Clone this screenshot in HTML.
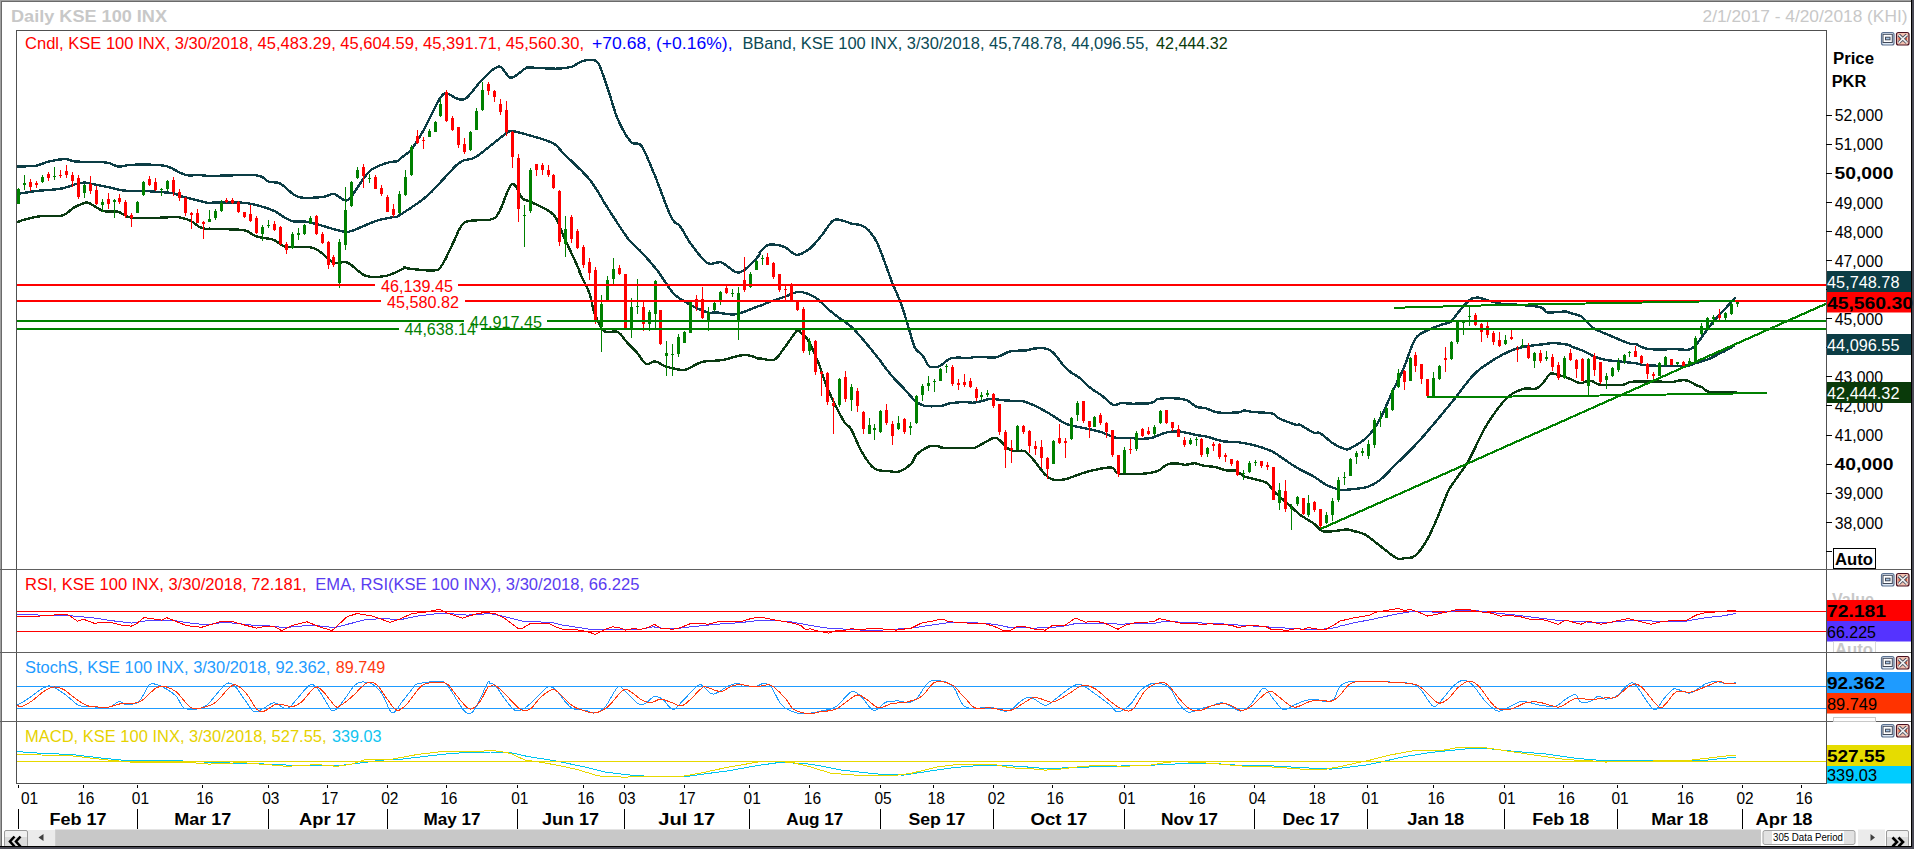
<!DOCTYPE html>
<html><head><meta charset="utf-8"><style>
html,body{margin:0;padding:0;background:#fff;}
body{width:1914px;height:849px;overflow:hidden;position:relative;}
svg{position:absolute;left:0;top:0;display:block;}
text{white-space:pre;}
</style></head><body>
<svg width="1914" height="849" viewBox="0 0 1914 849" shape-rendering="auto">
<rect x="0" y="0" width="1914" height="849" fill="#ffffff"/>
<rect x="0" y="0" width="2" height="849" fill="#a0a0a0"/>
<rect x="0" y="0" width="1914" height="2" fill="#a0a0a0"/>
<rect x="1" y="1" width="1910" height="1" fill="#6a6a6a"/>
<rect x="1" y="1" width="1" height="848" fill="#6a6a6a"/>
<rect x="1911" y="0" width="1" height="849" fill="#000000"/>
<rect x="1912" y="0" width="2" height="849" fill="#4a4a55"/>
<text x="11" y="21.5" font-family='"Liberation Sans", sans-serif' font-weight="bold" font-size="16" fill="#c8c8c8" textLength="156" lengthAdjust="spacingAndGlyphs">Daily KSE 100 INX</text>
<text x="1702.5" y="21.8" font-family='"Liberation Sans", sans-serif' font-size="16" fill="#c8c8c8" textLength="205" lengthAdjust="spacingAndGlyphs">2/1/2017 - 4/20/2018 (KHI)</text>
<defs><clipPath id="cm"><rect x="17" y="31" width="1809" height="538"/></clipPath><clipPath id="cr"><rect x="17" y="570" width="1809" height="82"/></clipPath><clipPath id="cs"><rect x="17" y="653" width="1809" height="68"/></clipPath><clipPath id="cc"><rect x="17" y="722" width="1809" height="61"/></clipPath></defs>
<g clip-path="url(#cm)">
<path d="M16.0,166.5 C19.3,166.4 30.3,166.5 35.8,165.7 C41.3,164.8 44.0,162.6 49.0,161.5 C53.9,160.4 61.1,159.1 65.5,159.1 C69.9,159.1 70.4,161.1 75.4,161.5 C80.3,162.0 89.6,161.7 95.1,161.9 C100.6,162.1 104.5,162.1 108.3,162.9 C112.2,163.6 114.4,166.2 118.2,166.5 C122.1,166.8 125.4,165.1 131.4,164.8 C137.5,164.6 148.5,164.6 154.5,164.8 C160.5,165.1 163.3,165.1 167.7,166.5 C172.1,167.9 177.3,171.6 180.9,173.1 C184.5,174.6 186.4,175.3 189.1,175.6 C191.9,175.8 193.9,174.7 197.4,174.7 C200.8,174.8 200.2,175.8 210.0,175.9 C219.8,176.0 246.2,174.4 255.9,175.3 C265.7,176.3 264.2,180.1 268.3,181.5 C272.4,182.9 275.7,181.3 280.7,183.8 C285.7,186.4 291.3,194.7 298.3,196.9 C305.4,199.1 317.2,197.4 323.1,196.9 C329.0,196.4 330.1,193.4 333.7,193.9 C337.2,194.4 341.3,199.6 344.3,200.1 C347.2,200.5 347.2,201.2 351.3,196.5 C355.5,191.8 363.1,177.4 369.0,171.8 C374.9,166.2 382.0,164.7 386.7,163.0 C391.4,161.2 395.1,161.9 397.3,161.2 C399.5,160.5 397.6,160.9 400.0,158.8 C402.4,156.8 407.9,153.7 411.8,148.9 C415.7,144.1 418.8,138.5 423.6,130.1 C428.3,121.7 436.1,104.4 440.0,98.3 C444.0,92.2 444.4,93.6 447.1,93.6 C449.9,93.6 453.4,97.5 456.5,98.3 C459.7,99.1 461.6,101.4 466.0,98.3 C470.3,95.2 477.0,84.7 482.4,79.4 C487.9,74.1 494.2,66.8 498.9,66.5 C503.7,66.2 506.4,77.4 510.7,77.8 C515.0,78.2 521.6,70.5 524.9,68.8 C528.1,67.1 524.8,67.6 530.0,67.6 C535.2,67.6 549.0,68.8 555.9,68.7 C562.8,68.5 566.9,68.1 571.5,66.8 C576.0,65.5 579.0,61.9 583.1,60.9 C587.2,59.9 592.8,58.8 596.1,60.9 C599.3,63.0 600.2,67.4 602.5,73.3 C604.9,79.3 607.7,88.9 610.3,96.6 C612.9,104.4 614.6,112.4 618.1,119.9 C621.5,127.5 627.2,137.7 631.0,142.0 C634.9,146.3 637.5,140.5 641.4,145.9 C645.3,151.3 649.4,162.5 654.4,174.4 C659.3,186.2 666.9,208.5 671.2,217.1 C675.5,225.7 676.7,221.7 680.0,226.2 C683.3,230.6 686.2,237.5 690.7,243.6 C695.3,249.7 702.1,259.8 707.2,262.9 C712.3,266.1 716.6,261.0 721.3,262.4 C726.1,263.9 731.6,270.7 735.5,271.9 C739.4,273.1 741.0,272.3 744.9,269.5 C748.8,266.8 756.5,258.3 759.0,255.4 C761.6,252.5 758.5,253.7 760.0,251.9 C761.5,250.2 765.1,246.0 768.2,244.9 C771.4,243.8 775.9,244.9 778.8,245.3 C781.8,245.8 783.0,246.1 785.9,247.7 C788.9,249.3 792.6,254.6 796.5,254.8 C800.4,255.0 805.3,252.0 809.5,248.9 C813.6,245.7 817.3,240.6 821.2,235.9 C825.2,231.2 829.5,223.2 833.0,220.6 C836.6,218.0 839.3,220.1 842.4,220.6 C845.6,221.1 848.7,222.9 851.9,223.7 C855.0,224.4 858.5,224.3 861.3,225.3 C864.0,226.4 865.6,226.9 868.4,230.0 C871.1,233.2 873.9,235.5 877.8,244.2 C881.7,252.8 888.0,271.8 891.9,281.8 C895.8,291.9 898.4,296.2 901.3,304.2 C904.2,312.3 907.0,322.7 909.3,330.0 C911.6,337.3 912.8,343.7 915.0,347.9 C917.2,352.1 920.3,352.5 922.5,355.4 C924.7,358.4 926.6,363.5 928.2,365.4 C929.7,367.3 930.0,366.6 931.9,366.8 C933.8,366.9 936.3,367.6 939.5,366.2 C942.6,364.8 946.4,359.7 950.8,358.3 C955.2,356.9 962.6,358.0 965.8,357.9 C969.1,357.8 968.4,358.1 970.0,357.9 C971.6,357.7 972.8,357.1 975.7,357.0 C978.5,356.9 983.5,357.3 987.0,357.3 C990.4,357.4 992.9,358.2 996.4,357.3 C999.8,356.5 1004.9,353.3 1007.7,352.3 C1010.5,351.2 1010.2,351.2 1013.3,350.9 C1016.5,350.6 1023.1,350.8 1026.5,350.4 C1030.0,350.0 1030.9,348.8 1034.1,348.5 C1037.2,348.2 1042.2,347.9 1045.4,348.5 C1048.5,349.1 1049.8,349.3 1052.9,352.3 C1056.1,355.2 1061.1,362.9 1064.2,366.4 C1067.4,369.8 1069.3,371.1 1071.8,373.0 C1074.3,374.9 1076.2,375.2 1079.3,377.7 C1082.5,380.2 1086.8,385.1 1090.6,388.1 C1094.4,391.0 1098.2,392.8 1101.9,395.6 C1105.7,398.4 1110.1,403.8 1113.2,405.0 C1116.4,406.3 1117.6,403.4 1120.8,403.1 C1123.9,402.9 1128.9,403.6 1132.1,403.7 C1135.3,403.8 1137.4,403.6 1140.0,403.6 C1142.6,403.5 1145.3,403.8 1147.5,403.6 C1149.7,403.3 1151.3,403.0 1153.2,402.2 C1155.1,401.5 1154.8,399.5 1158.8,398.8 C1162.9,398.2 1173.0,398.2 1177.7,398.5 C1182.4,398.7 1184.0,399.0 1187.1,400.4 C1190.3,401.7 1193.4,405.4 1196.5,406.8 C1199.7,408.1 1202.5,407.3 1206.0,408.3 C1209.4,409.2 1211.9,411.7 1217.3,412.4 C1222.6,413.1 1233.6,412.7 1238.0,412.4 C1242.4,412.1 1241.1,410.6 1243.7,410.5 C1246.2,410.5 1248.4,411.5 1253.1,412.0 C1257.8,412.5 1267.5,412.4 1271.9,413.5 C1276.3,414.6 1275.4,416.8 1279.5,418.6 C1283.5,420.5 1293.0,423.8 1296.4,424.9 C1299.8,425.9 1297.2,423.5 1300.0,424.8 C1302.8,426.1 1310.1,431.2 1313.4,432.6 C1316.8,434.0 1316.8,431.2 1320.1,433.1 C1323.5,434.9 1329.5,441.2 1333.6,443.8 C1337.7,446.5 1342.0,448.2 1344.8,449.0 C1347.6,449.7 1346.6,450.3 1350.4,448.3 C1354.1,446.3 1362.2,442.0 1367.2,437.1 C1372.1,432.2 1375.9,426.3 1380.0,419.0 C1384.1,411.7 1387.9,401.5 1391.8,393.1 C1395.7,384.6 1399.6,377.4 1403.6,368.3 C1407.5,359.3 1411.4,345.2 1415.3,338.9 C1419.3,332.6 1422.8,333.0 1427.1,330.6 C1431.4,328.3 1437.3,326.2 1441.2,324.8 C1445.2,323.3 1447.9,323.9 1450.7,321.9 C1453.4,320.0 1454.6,316.6 1457.7,313.0 C1460.9,309.3 1466.4,302.6 1469.5,300.0 C1472.7,297.5 1474.6,297.9 1476.6,297.7 C1478.5,297.4 1478.9,297.8 1481.3,298.4 C1483.7,299.0 1487.2,300.3 1490.7,301.2 C1494.3,302.1 1498.2,303.4 1502.5,304.0 C1506.8,304.6 1510.3,304.2 1516.6,304.7 C1522.9,305.2 1535.1,305.8 1540.2,307.1 C1545.3,308.4 1544.1,311.7 1547.3,312.5 C1550.4,313.3 1555.5,311.9 1559.0,311.8 C1562.6,311.7 1566.6,311.6 1568.5,311.8 C1570.3,312.0 1567.8,312.2 1570.0,313.0 C1572.2,313.8 1577.7,314.1 1581.5,316.6 C1585.4,319.1 1588.1,324.6 1593.1,327.8 C1598.0,331.1 1605.2,333.4 1611.2,336.1 C1617.3,338.7 1625.2,342.2 1629.4,343.5 C1633.5,344.8 1634.0,343.4 1636.0,344.0 C1637.9,344.5 1638.4,345.9 1640.9,346.8 C1643.4,347.7 1645.0,348.8 1650.8,349.2 C1656.6,349.7 1669.2,349.2 1675.5,349.2 C1681.8,349.3 1685.4,350.2 1688.7,349.6 C1692.0,349.0 1693.1,347.7 1695.3,345.6 C1697.5,343.5 1699.7,339.9 1701.9,336.9 C1704.1,333.9 1706.3,330.7 1708.5,327.8 C1710.7,324.9 1712.3,322.7 1715.1,319.6 C1717.8,316.4 1721.6,312.6 1725.0,308.9 C1728.4,305.1 1733.9,299.2 1735.7,297.3" fill="none" stroke="#0c3d45" stroke-width="2.4" stroke-linejoin="round" shape-rendering="crispEdges"/>
<path d="M16.0,194.2 C19.6,193.6 30.0,191.8 37.4,190.9 C44.9,190.0 53.9,189.9 60.5,188.7 C67.1,187.6 72.9,184.8 77.0,183.8 C81.1,182.8 82.2,182.5 85.2,182.6 C88.3,182.8 91.3,183.9 95.1,184.6 C99.0,185.4 104.5,186.3 108.3,187.1 C112.2,187.9 114.9,188.9 118.2,189.6 C121.5,190.2 123.2,190.6 128.1,190.9 C133.1,191.2 140.5,190.8 147.9,191.2 C155.3,191.6 167.1,192.4 172.6,193.2 C178.1,194.0 177.9,195.3 180.9,196.2 C183.9,197.1 186.7,197.6 190.8,198.6 C194.9,199.7 202.4,201.8 205.6,202.4 C208.8,203.1 204.0,202.7 210.0,202.7 C216.0,202.8 234.1,202.3 241.8,202.7 C249.5,203.1 250.6,203.7 255.9,205.0 C261.2,206.3 267.7,208.0 273.6,210.7 C279.5,213.3 285.4,219.0 291.3,220.9 C297.2,222.8 300.7,220.5 308.9,222.2 C317.2,223.8 333.7,229.5 340.7,231.0 C347.8,232.5 345.5,232.7 351.3,231.0 C357.2,229.3 369.0,223.3 376.1,220.9 C383.1,218.6 389.8,217.9 393.7,216.9 C397.7,215.9 394.2,218.6 400.0,214.9 C405.8,211.2 418.5,203.5 428.3,194.9 C438.1,186.2 451.0,169.4 458.9,163.1 C466.7,156.8 467.5,162.1 475.4,157.2 C483.2,152.3 499.7,137.9 506.0,133.6 C512.3,129.3 509.1,131.0 513.1,131.3 C517.1,131.6 523.3,133.5 530.0,135.5 C536.7,137.5 547.7,140.2 553.3,143.3 C558.9,146.3 557.6,147.6 563.7,153.6 C569.7,159.7 582.2,170.5 589.6,179.5 C596.9,188.6 601.2,198.1 607.7,208.0 C614.2,218.0 622.8,231.8 628.4,239.1 C634.1,246.5 636.6,246.9 641.4,252.1 C646.1,257.2 653.0,265.1 656.9,269.9 C660.8,274.8 661.9,277.2 664.8,281.3 C667.7,285.3 670.3,290.5 674.2,294.3 C678.2,298.0 682.9,300.7 688.4,303.7 C693.9,306.7 702.5,310.9 707.2,312.4 C711.9,313.8 711.9,312.1 716.6,312.4 C721.3,312.7 728.4,315.3 735.5,314.3 C742.5,313.2 754.9,307.4 759.0,306.0 C763.1,304.7 758.3,306.8 760.0,306.1 C761.7,305.4 765.5,303.4 769.4,301.9 C773.3,300.4 778.8,298.8 783.6,297.2 C788.3,295.5 793.8,292.6 797.7,292.0 C801.6,291.4 804.0,292.6 807.1,293.6 C810.3,294.7 812.6,295.4 816.5,298.3 C820.5,301.3 825.2,306.8 830.7,311.3 C836.2,315.8 845.5,322.3 849.5,325.4 C853.5,328.5 850.3,325.2 854.7,330.0 C859.0,334.8 869.4,347.1 875.4,354.5 C881.4,361.9 885.4,368.3 890.5,374.3 C895.5,380.3 901.5,385.9 905.5,390.3 C909.6,394.7 911.8,398.1 915.0,400.7 C918.1,403.3 920.0,404.9 924.4,405.8 C928.8,406.6 937.0,406.2 941.3,405.8 C945.7,405.3 946.1,403.8 950.8,403.1 C955.5,402.5 966.4,402.0 969.6,402.0 C972.8,402.0 968.1,403.3 970.0,403.1 C971.9,403.0 977.9,402.0 981.3,401.3 C984.8,400.5 987.6,399.0 990.7,398.8 C993.9,398.6 997.0,399.6 1000.2,399.9 C1003.3,400.2 1005.8,400.5 1009.6,400.7 C1013.3,400.9 1018.4,400.3 1022.8,401.3 C1027.2,402.2 1031.6,404.3 1036.0,406.3 C1040.4,408.4 1044.4,410.7 1049.2,413.5 C1053.9,416.3 1059.8,420.8 1064.2,422.9 C1068.6,425.1 1071.1,425.2 1075.5,426.3 C1079.9,427.4 1086.2,428.5 1090.6,429.5 C1095.0,430.5 1097.8,431.0 1101.9,432.3 C1106.0,433.7 1110.4,436.7 1115.1,437.6 C1119.8,438.6 1126.0,437.8 1130.2,438.0 C1134.3,438.2 1136.5,438.8 1140.0,438.8 C1143.5,438.8 1147.5,438.9 1151.3,438.0 C1155.1,437.2 1159.5,434.7 1162.6,433.7 C1165.8,432.7 1167.0,432.1 1170.2,431.8 C1173.3,431.5 1177.1,431.3 1181.5,431.8 C1185.9,432.4 1192.1,434.2 1196.5,435.0 C1200.9,435.9 1203.5,435.9 1207.8,436.9 C1212.2,438.0 1217.9,440.4 1222.9,441.3 C1228.0,442.1 1233.0,441.6 1238.0,442.2 C1243.0,442.8 1248.1,443.8 1253.1,445.0 C1258.1,446.3 1264.4,448.3 1268.2,449.7 C1271.9,451.1 1271.9,451.1 1275.7,453.5 C1279.5,455.9 1286.7,461.2 1290.8,463.9 C1294.8,466.5 1296.2,467.5 1300.0,469.5 C1303.8,471.6 1309.0,473.6 1313.4,476.3 C1317.9,478.9 1322.4,483.0 1326.9,485.2 C1331.3,487.5 1336.2,489.0 1340.3,489.7 C1344.4,490.4 1347.0,489.7 1351.5,489.2 C1356.0,488.8 1362.4,488.5 1367.2,487.0 C1371.9,485.5 1375.5,483.5 1380.0,480.0 C1384.5,476.5 1387.9,472.3 1394.1,466.1 C1400.4,459.9 1410.2,450.6 1417.7,442.5 C1425.2,434.5 1432.6,425.3 1438.9,417.8 C1445.2,410.3 1449.5,405.0 1455.4,397.8 C1461.3,390.5 1467.9,380.5 1474.2,374.2 C1480.5,367.9 1486.8,364.1 1493.1,360.1 C1499.4,356.1 1506.4,352.5 1511.9,350.2 C1517.4,347.9 1520.6,347.5 1526.1,346.4 C1531.6,345.4 1540.2,344.6 1544.9,344.1 C1549.6,343.5 1550.4,343.0 1554.3,343.1 C1558.2,343.3 1565.8,344.3 1568.5,344.8 C1571.1,345.3 1567.5,344.9 1570.0,346.0 C1572.5,347.0 1579.1,349.1 1583.2,350.9 C1587.3,352.7 1590.9,355.2 1594.7,356.7 C1598.6,358.2 1602.7,359.2 1606.3,360.0 C1609.8,360.7 1611.2,360.6 1616.2,361.1 C1621.1,361.7 1630.7,362.6 1636.0,363.3 C1641.2,364.0 1639.2,365.0 1647.5,365.4 C1655.7,365.8 1677.4,366.1 1685.4,365.7 C1693.4,365.4 1691.5,364.4 1695.3,363.3 C1699.2,362.2 1704.7,360.7 1708.5,359.1 C1712.3,357.6 1715.1,355.8 1718.4,354.2 C1721.7,352.5 1725.5,350.8 1728.3,349.2 C1731.0,347.7 1733.8,345.8 1734.9,345.1" fill="none" stroke="#0c3d45" stroke-width="2.4" stroke-linejoin="round" shape-rendering="crispEdges"/>
<path d="M16.0,222.5 C17.6,222.0 21.5,220.3 25.9,219.2 C30.3,218.2 36.3,216.6 42.4,216.0 C48.4,215.3 56.9,217.0 62.2,215.6 C67.4,214.2 69.9,209.9 73.7,207.7 C77.6,205.6 82.5,203.4 85.2,202.8 C88.0,202.1 87.2,202.2 90.2,203.6 C93.2,205.0 98.7,209.6 103.4,211.0 C108.1,212.4 113.6,210.7 118.2,211.8 C122.9,212.9 123.7,216.6 131.4,217.6 C139.1,218.6 157.8,217.7 164.4,217.6 C171.0,217.5 168.2,216.8 171.0,216.8 C173.7,216.8 177.6,216.9 180.9,217.6 C184.2,218.3 187.8,219.4 190.8,220.9 C193.8,222.4 196.5,225.4 199.0,226.7 C201.5,228.0 203.8,228.5 205.6,228.8 C207.4,229.2 206.6,228.6 210.0,228.7 C213.4,228.8 220.0,228.9 225.9,229.2 C231.8,229.5 240.3,229.3 245.3,230.5 C250.3,231.6 251.2,234.7 255.9,236.3 C260.6,237.9 268.6,238.1 273.6,239.8 C278.6,241.6 280.1,245.7 286.0,246.9 C291.9,248.1 303.3,246.2 308.9,246.9 C314.5,247.6 315.4,248.7 319.5,251.3 C323.7,253.9 329.0,260.5 333.7,262.4 C338.4,264.4 342.5,260.6 347.8,262.8 C353.1,265.0 359.0,273.5 365.5,275.7 C372.0,277.8 380.2,277.0 386.7,275.7 C393.2,274.4 401.2,269.3 404.3,268.1 C407.5,266.8 400.6,267.8 405.5,268.2 C410.4,268.6 427.6,271.1 433.7,270.5 C439.9,269.9 438.9,269.6 442.2,264.8 C445.5,260.1 449.8,249.3 453.5,242.2 C457.3,235.2 458.7,226.2 464.8,222.4 C471.0,218.7 484.6,221.3 490.3,219.6 C496.0,218.0 495.3,218.4 498.9,212.5 C502.5,206.7 508.0,186.6 511.9,184.3 C515.8,181.9 519.5,195.5 522.5,198.4 C525.5,201.3 524.9,198.9 530.0,201.6 C535.1,204.2 547.7,208.7 553.3,214.5 C558.9,220.3 559.4,227.3 563.7,236.5 C568.0,245.8 576.5,263.9 579.2,269.9 C581.9,276.0 578.3,269.2 580.0,273.1 C581.7,276.9 587.1,286.6 589.4,293.1 C591.8,299.6 591.8,305.6 594.1,311.9 C596.5,318.2 599.6,327.4 603.6,330.8 C607.5,334.1 613.8,330.0 617.7,331.9 C621.6,333.9 624.0,339.2 627.1,342.5 C630.3,345.9 633.4,348.4 636.5,352.0 C639.7,355.5 642.8,362.2 646.0,363.7 C649.1,365.3 652.2,361.0 655.4,361.4 C658.5,361.8 660.9,364.7 664.8,366.1 C668.7,367.5 675.4,369.0 678.9,369.6 C682.5,370.2 682.1,370.9 686.0,369.6 C689.9,368.3 696.6,363.4 702.5,361.9 C708.4,360.3 715.1,361.3 721.3,360.2 C727.6,359.2 735.5,356.3 740.2,355.5 C744.9,354.7 746.5,354.9 749.6,355.5 C752.8,356.1 757.3,358.5 759.0,359.0 C760.8,359.5 757.5,358.3 760.0,358.4 C762.5,358.5 770.2,361.2 774.1,359.6 C778.1,358.0 779.7,353.9 783.6,349.0 C787.4,344.1 794.5,333.0 797.2,330.1 C800.0,327.3 798.3,330.3 800.0,331.9 C801.7,333.4 804.4,334.1 807.5,339.4 C810.7,344.8 815.4,355.4 818.8,363.9 C822.3,372.4 824.2,380.9 828.3,390.3 C832.4,399.7 839.6,414.0 843.3,420.5 C847.1,426.9 847.7,423.6 850.9,428.9 C854.0,434.3 858.3,445.9 862.2,452.5 C866.1,459.1 869.7,465.4 874.4,468.5 C879.2,471.7 886.2,470.9 890.5,471.3 C894.7,471.8 896.4,472.6 899.9,471.3 C903.3,470.1 908.4,466.6 911.2,463.8 C914.0,461.0 914.0,457.2 916.8,454.4 C919.7,451.6 924.7,448.3 928.2,446.8 C931.6,445.4 935.1,445.7 937.6,445.9 C940.1,446.1 937.8,447.5 943.2,447.8 C948.6,448.1 964.6,447.9 970.0,447.8 C975.4,447.7 971.7,449.1 975.7,447.4 C979.6,445.8 989.5,439.1 993.6,438.0 C997.6,436.9 997.8,439.1 1000.2,440.8 C1002.5,442.6 1005.2,446.6 1007.7,448.4 C1010.2,450.1 1012.4,450.7 1015.2,451.2 C1018.1,451.7 1021.5,449.6 1024.7,451.2 C1027.8,452.8 1030.6,456.7 1034.1,460.6 C1037.5,464.5 1042.2,471.6 1045.4,474.8 C1048.5,477.9 1049.8,478.7 1052.9,479.5 C1056.1,480.3 1060.5,480.1 1064.2,479.5 C1068.0,478.8 1071.8,477.0 1075.5,475.7 C1079.3,474.4 1081.8,473.2 1086.8,471.9 C1091.9,470.6 1101.3,468.4 1105.7,467.8 C1110.1,467.2 1111.0,467.2 1113.2,468.2 C1115.4,469.2 1114.4,472.9 1118.9,473.8 C1123.3,474.8 1134.6,474.0 1140.0,473.9 C1145.4,473.7 1148.2,473.3 1151.3,472.7 C1154.4,472.2 1156.3,471.8 1158.8,470.5 C1161.4,469.1 1163.6,466.0 1166.4,464.8 C1169.2,463.6 1172.7,463.3 1175.8,463.3 C1178.9,463.3 1182.1,464.8 1185.2,464.8 C1188.4,464.8 1191.5,463.1 1194.7,463.3 C1197.8,463.5 1200.6,465.1 1204.1,465.8 C1207.5,466.4 1211.6,466.3 1215.4,467.1 C1219.2,467.9 1223.2,469.8 1226.7,470.5 C1230.1,471.1 1233.3,469.9 1236.1,470.8 C1238.9,471.8 1240.8,474.8 1243.7,476.1 C1246.5,477.5 1249.3,477.8 1253.1,478.9 C1256.8,480.0 1262.5,480.4 1266.3,482.7 C1270.0,485.1 1271.6,489.2 1275.7,493.1 C1279.8,497.0 1286.7,502.7 1290.8,506.3 C1294.8,509.9 1296.2,511.9 1300.0,514.8 C1303.8,517.6 1309.7,520.5 1313.4,523.3 C1317.2,526.0 1319.0,529.8 1322.4,531.1 C1325.7,532.4 1329.5,531.4 1333.6,531.1 C1337.7,530.8 1343.7,529.5 1347.0,529.5 C1350.4,529.5 1350.7,530.3 1353.7,531.1 C1356.7,531.9 1360.8,532.2 1364.9,534.5 C1369.0,536.7 1373.1,540.6 1378.4,544.5 C1383.6,548.5 1391.8,555.7 1396.3,558.0 C1400.7,560.2 1402.0,558.3 1405.2,558.0 C1408.4,557.6 1411.6,558.9 1415.3,555.7 C1419.0,552.6 1423.7,545.8 1427.6,538.9 C1431.5,532.0 1435.4,522.2 1438.8,514.3 C1442.2,506.5 1445.0,497.7 1447.8,491.9 C1450.5,486.2 1451.8,485.5 1455.4,480.0 C1459.0,474.5 1464.4,468.0 1469.5,459.0 C1474.6,450.0 1479.7,436.3 1486.0,426.1 C1492.3,415.8 1500.9,404.0 1507.2,397.8 C1513.5,391.6 1519.0,390.3 1523.7,388.8 C1528.4,387.3 1532.3,389.7 1535.5,388.8 C1538.6,388.0 1540.2,386.1 1542.5,383.7 C1544.9,381.2 1547.6,375.9 1549.6,374.2 C1551.6,372.6 1552.0,373.4 1554.3,373.8 C1556.7,374.1 1561.1,375.7 1563.7,376.6 C1566.4,377.4 1567.3,377.9 1570.0,378.9 C1572.7,380.0 1577.1,382.6 1579.9,383.1 C1582.6,383.5 1584.3,381.7 1586.5,381.4 C1588.7,381.1 1590.9,380.9 1593.1,381.4 C1595.3,382.0 1594.7,384.1 1599.7,384.7 C1604.6,385.2 1617.5,385.2 1622.8,384.7 C1628.0,384.2 1626.6,382.4 1631.0,381.9 C1635.4,381.3 1642.3,381.4 1649.1,381.4 C1656.0,381.4 1667.3,382.0 1672.2,381.9 C1677.2,381.8 1676.3,380.8 1678.8,380.6 C1681.3,380.4 1684.0,379.8 1687.1,380.6 C1690.1,381.4 1694.5,384.4 1697.0,385.5 C1699.4,386.6 1699.7,386.1 1701.9,387.2 C1704.1,388.3 1704.4,391.3 1710.1,392.1 C1715.9,392.9 1732.1,392.1 1736.5,392.1" fill="none" stroke="#0a3a12" stroke-width="2.4" stroke-linejoin="round" shape-rendering="crispEdges"/>
<rect x="18" y="188" width="1" height="16" fill="#008000"/>
<rect x="17" y="189" width="3" height="15" fill="#008000"/>
<rect x="24" y="175" width="1" height="15" fill="#008000"/>
<rect x="23" y="183" width="3" height="2" fill="#008000"/>
<rect x="30" y="179" width="1" height="12" fill="#ff0000"/>
<rect x="29" y="182" width="3" height="5" fill="#ff0000"/>
<rect x="36" y="181" width="1" height="7" fill="#ff0000"/>
<rect x="35" y="183" width="3" height="2" fill="#ff0000"/>
<rect x="42" y="175" width="1" height="8" fill="#008000"/>
<rect x="41" y="177" width="3" height="5" fill="#008000"/>
<rect x="48" y="172" width="1" height="9" fill="#ff0000"/>
<rect x="47" y="174" width="3" height="4" fill="#ff0000"/>
<rect x="54" y="167" width="1" height="13" fill="#008000"/>
<rect x="53" y="176" width="3" height="1" fill="#008000"/>
<rect x="60" y="170" width="1" height="8" fill="#ff0000"/>
<rect x="59" y="175" width="3" height="1" fill="#ff0000"/>
<rect x="66" y="165" width="1" height="13" fill="#ff0000"/>
<rect x="65" y="171" width="3" height="4" fill="#ff0000"/>
<rect x="72" y="172" width="1" height="15" fill="#ff0000"/>
<rect x="71" y="175" width="3" height="6" fill="#ff0000"/>
<rect x="78" y="175" width="1" height="24" fill="#ff0000"/>
<rect x="77" y="178" width="3" height="19" fill="#ff0000"/>
<rect x="84" y="184" width="1" height="14" fill="#008000"/>
<rect x="83" y="185" width="3" height="8" fill="#008000"/>
<rect x="90" y="176" width="1" height="18" fill="#ff0000"/>
<rect x="89" y="184" width="3" height="7" fill="#ff0000"/>
<rect x="96" y="186" width="1" height="19" fill="#ff0000"/>
<rect x="95" y="190" width="3" height="14" fill="#ff0000"/>
<rect x="102" y="199" width="1" height="13" fill="#008000"/>
<rect x="101" y="202" width="3" height="3" fill="#008000"/>
<rect x="108" y="193" width="1" height="16" fill="#ff0000"/>
<rect x="107" y="199" width="3" height="5" fill="#ff0000"/>
<rect x="114" y="199" width="1" height="19" fill="#008000"/>
<rect x="113" y="200" width="3" height="2" fill="#008000"/>
<rect x="119" y="194" width="1" height="10" fill="#ff0000"/>
<rect x="118" y="198" width="3" height="4" fill="#ff0000"/>
<rect x="125" y="200" width="1" height="18" fill="#ff0000"/>
<rect x="124" y="202" width="3" height="14" fill="#ff0000"/>
<rect x="131" y="213" width="1" height="14" fill="#ff0000"/>
<rect x="130" y="215" width="3" height="3" fill="#ff0000"/>
<rect x="137" y="201" width="1" height="12" fill="#008000"/>
<rect x="136" y="202" width="3" height="11" fill="#008000"/>
<rect x="143" y="181" width="1" height="15" fill="#008000"/>
<rect x="142" y="182" width="3" height="13" fill="#008000"/>
<rect x="149" y="176" width="1" height="10" fill="#ff0000"/>
<rect x="148" y="179" width="3" height="6" fill="#ff0000"/>
<rect x="155" y="178" width="1" height="13" fill="#ff0000"/>
<rect x="154" y="182" width="3" height="8" fill="#ff0000"/>
<rect x="161" y="188" width="1" height="8" fill="#008000"/>
<rect x="160" y="189" width="3" height="1" fill="#008000"/>
<rect x="167" y="180" width="1" height="11" fill="#008000"/>
<rect x="166" y="181" width="3" height="8" fill="#008000"/>
<rect x="173" y="177" width="1" height="19" fill="#ff0000"/>
<rect x="172" y="180" width="3" height="12" fill="#ff0000"/>
<rect x="179" y="189" width="1" height="12" fill="#ff0000"/>
<rect x="178" y="192" width="3" height="6" fill="#ff0000"/>
<rect x="185" y="197" width="1" height="19" fill="#ff0000"/>
<rect x="184" y="198" width="3" height="15" fill="#ff0000"/>
<rect x="191" y="212" width="1" height="17" fill="#ff0000"/>
<rect x="190" y="213" width="3" height="2" fill="#ff0000"/>
<rect x="197" y="209" width="1" height="14" fill="#ff0000"/>
<rect x="196" y="213" width="3" height="10" fill="#ff0000"/>
<rect x="203" y="221" width="1" height="18" fill="#ff0000"/>
<rect x="202" y="222" width="3" height="2" fill="#ff0000"/>
<rect x="209" y="210" width="1" height="12" fill="#008000"/>
<rect x="208" y="219" width="3" height="3" fill="#008000"/>
<rect x="215" y="209" width="1" height="11" fill="#008000"/>
<rect x="214" y="211" width="3" height="7" fill="#008000"/>
<rect x="221" y="200" width="1" height="12" fill="#008000"/>
<rect x="220" y="203" width="3" height="8" fill="#008000"/>
<rect x="226" y="198" width="1" height="5" fill="#ff0000"/>
<rect x="225" y="200" width="3" height="2" fill="#ff0000"/>
<rect x="232" y="198" width="1" height="6" fill="#ff0000"/>
<rect x="231" y="200" width="3" height="3" fill="#ff0000"/>
<rect x="238" y="201" width="1" height="12" fill="#ff0000"/>
<rect x="237" y="202" width="3" height="10" fill="#ff0000"/>
<rect x="244" y="212" width="1" height="6" fill="#ff0000"/>
<rect x="243" y="212" width="3" height="5" fill="#ff0000"/>
<rect x="250" y="205" width="1" height="17" fill="#ff0000"/>
<rect x="249" y="214" width="3" height="7" fill="#ff0000"/>
<rect x="256" y="216" width="1" height="18" fill="#ff0000"/>
<rect x="255" y="218" width="3" height="15" fill="#ff0000"/>
<rect x="262" y="225" width="1" height="16" fill="#008000"/>
<rect x="261" y="227" width="3" height="7" fill="#008000"/>
<rect x="268" y="220" width="1" height="8" fill="#008000"/>
<rect x="267" y="225" width="3" height="1" fill="#008000"/>
<rect x="274" y="221" width="1" height="10" fill="#ff0000"/>
<rect x="273" y="224" width="3" height="6" fill="#ff0000"/>
<rect x="280" y="226" width="1" height="19" fill="#ff0000"/>
<rect x="279" y="227" width="3" height="17" fill="#ff0000"/>
<rect x="286" y="242" width="1" height="12" fill="#ff0000"/>
<rect x="285" y="244" width="3" height="6" fill="#ff0000"/>
<rect x="292" y="232" width="1" height="17" fill="#008000"/>
<rect x="291" y="234" width="3" height="14" fill="#008000"/>
<rect x="298" y="228" width="1" height="12" fill="#008000"/>
<rect x="297" y="233" width="3" height="2" fill="#008000"/>
<rect x="304" y="224" width="1" height="11" fill="#008000"/>
<rect x="303" y="225" width="3" height="9" fill="#008000"/>
<rect x="310" y="216" width="1" height="8" fill="#008000"/>
<rect x="309" y="218" width="3" height="5" fill="#008000"/>
<rect x="316" y="215" width="1" height="20" fill="#ff0000"/>
<rect x="315" y="216" width="3" height="18" fill="#ff0000"/>
<rect x="322" y="232" width="1" height="12" fill="#ff0000"/>
<rect x="321" y="234" width="3" height="9" fill="#ff0000"/>
<rect x="328" y="241" width="1" height="28" fill="#ff0000"/>
<rect x="327" y="242" width="3" height="23" fill="#ff0000"/>
<rect x="333" y="255" width="1" height="12" fill="#ff0000"/>
<rect x="332" y="257" width="3" height="8" fill="#ff0000"/>
<rect x="339" y="239" width="1" height="49" fill="#008000"/>
<rect x="338" y="242" width="3" height="41" fill="#008000"/>
<rect x="345" y="187" width="1" height="63" fill="#008000"/>
<rect x="344" y="210" width="3" height="35" fill="#008000"/>
<rect x="351" y="181" width="1" height="26" fill="#008000"/>
<rect x="350" y="182" width="3" height="24" fill="#008000"/>
<rect x="357" y="167" width="1" height="12" fill="#008000"/>
<rect x="356" y="170" width="3" height="8" fill="#008000"/>
<rect x="363" y="164" width="1" height="24" fill="#ff0000"/>
<rect x="362" y="167" width="3" height="9" fill="#ff0000"/>
<rect x="369" y="174" width="1" height="9" fill="#008000"/>
<rect x="368" y="178" width="3" height="1" fill="#008000"/>
<rect x="375" y="175" width="1" height="14" fill="#ff0000"/>
<rect x="374" y="177" width="3" height="12" fill="#ff0000"/>
<rect x="381" y="185" width="1" height="11" fill="#ff0000"/>
<rect x="380" y="188" width="3" height="6" fill="#ff0000"/>
<rect x="387" y="195" width="1" height="17" fill="#ff0000"/>
<rect x="386" y="197" width="3" height="15" fill="#ff0000"/>
<rect x="393" y="204" width="1" height="13" fill="#ff0000"/>
<rect x="392" y="209" width="3" height="6" fill="#ff0000"/>
<rect x="399" y="191" width="1" height="23" fill="#008000"/>
<rect x="398" y="194" width="3" height="19" fill="#008000"/>
<rect x="405" y="170" width="1" height="26" fill="#008000"/>
<rect x="404" y="177" width="3" height="18" fill="#008000"/>
<rect x="411" y="145" width="1" height="31" fill="#008000"/>
<rect x="410" y="147" width="3" height="28" fill="#008000"/>
<rect x="417" y="130" width="1" height="14" fill="#ff0000"/>
<rect x="416" y="136" width="3" height="7" fill="#ff0000"/>
<rect x="423" y="137" width="1" height="12" fill="#ff0000"/>
<rect x="422" y="140" width="3" height="1" fill="#ff0000"/>
<rect x="429" y="129" width="1" height="8" fill="#008000"/>
<rect x="428" y="131" width="3" height="6" fill="#008000"/>
<rect x="435" y="121" width="1" height="11" fill="#008000"/>
<rect x="434" y="122" width="3" height="10" fill="#008000"/>
<rect x="440" y="99" width="1" height="18" fill="#008000"/>
<rect x="439" y="104" width="3" height="12" fill="#008000"/>
<rect x="446" y="90" width="1" height="32" fill="#ff0000"/>
<rect x="445" y="92" width="3" height="29" fill="#ff0000"/>
<rect x="452" y="116" width="1" height="15" fill="#ff0000"/>
<rect x="451" y="118" width="3" height="12" fill="#ff0000"/>
<rect x="458" y="127" width="1" height="21" fill="#ff0000"/>
<rect x="457" y="127" width="3" height="18" fill="#ff0000"/>
<rect x="464" y="138" width="1" height="16" fill="#ff0000"/>
<rect x="463" y="144" width="3" height="8" fill="#ff0000"/>
<rect x="470" y="131" width="1" height="20" fill="#008000"/>
<rect x="469" y="132" width="3" height="18" fill="#008000"/>
<rect x="476" y="108" width="1" height="22" fill="#008000"/>
<rect x="475" y="111" width="3" height="19" fill="#008000"/>
<rect x="482" y="82" width="1" height="29" fill="#008000"/>
<rect x="481" y="90" width="3" height="20" fill="#008000"/>
<rect x="488" y="82" width="1" height="13" fill="#ff0000"/>
<rect x="487" y="84" width="3" height="7" fill="#ff0000"/>
<rect x="494" y="90" width="1" height="12" fill="#ff0000"/>
<rect x="493" y="91" width="3" height="6" fill="#ff0000"/>
<rect x="500" y="99" width="1" height="16" fill="#ff0000"/>
<rect x="499" y="104" width="3" height="8" fill="#ff0000"/>
<rect x="506" y="101" width="1" height="35" fill="#ff0000"/>
<rect x="505" y="110" width="3" height="22" fill="#ff0000"/>
<rect x="512" y="131" width="1" height="37" fill="#ff0000"/>
<rect x="511" y="132" width="3" height="25" fill="#ff0000"/>
<rect x="518" y="154" width="1" height="68" fill="#ff0000"/>
<rect x="517" y="158" width="3" height="51" fill="#ff0000"/>
<rect x="524" y="205" width="1" height="42" fill="#008000"/>
<rect x="523" y="215" width="3" height="1" fill="#008000"/>
<rect x="530" y="168" width="1" height="45" fill="#008000"/>
<rect x="529" y="170" width="3" height="41" fill="#008000"/>
<rect x="536" y="164" width="1" height="12" fill="#ff0000"/>
<rect x="535" y="164" width="3" height="6" fill="#ff0000"/>
<rect x="542" y="163" width="1" height="12" fill="#ff0000"/>
<rect x="541" y="165" width="3" height="5" fill="#ff0000"/>
<rect x="548" y="165" width="1" height="12" fill="#ff0000"/>
<rect x="547" y="170" width="3" height="5" fill="#ff0000"/>
<rect x="553" y="174" width="1" height="15" fill="#ff0000"/>
<rect x="552" y="175" width="3" height="13" fill="#ff0000"/>
<rect x="559" y="190" width="1" height="56" fill="#ff0000"/>
<rect x="558" y="191" width="3" height="51" fill="#ff0000"/>
<rect x="565" y="216" width="1" height="41" fill="#008000"/>
<rect x="564" y="229" width="3" height="15" fill="#008000"/>
<rect x="571" y="215" width="1" height="28" fill="#ff0000"/>
<rect x="570" y="217" width="3" height="22" fill="#ff0000"/>
<rect x="577" y="229" width="1" height="20" fill="#ff0000"/>
<rect x="576" y="231" width="3" height="17" fill="#ff0000"/>
<rect x="583" y="245" width="1" height="23" fill="#ff0000"/>
<rect x="582" y="247" width="3" height="18" fill="#ff0000"/>
<rect x="589" y="258" width="1" height="22" fill="#ff0000"/>
<rect x="588" y="262" width="3" height="11" fill="#ff0000"/>
<rect x="595" y="267" width="1" height="57" fill="#ff0000"/>
<rect x="594" y="270" width="3" height="51" fill="#ff0000"/>
<rect x="601" y="295" width="1" height="57" fill="#008000"/>
<rect x="600" y="304" width="3" height="23" fill="#008000"/>
<rect x="607" y="276" width="1" height="26" fill="#008000"/>
<rect x="606" y="280" width="3" height="21" fill="#008000"/>
<rect x="613" y="258" width="1" height="28" fill="#008000"/>
<rect x="612" y="269" width="3" height="10" fill="#008000"/>
<rect x="619" y="265" width="1" height="10" fill="#ff0000"/>
<rect x="618" y="268" width="3" height="6" fill="#ff0000"/>
<rect x="625" y="274" width="1" height="54" fill="#ff0000"/>
<rect x="624" y="274" width="3" height="54" fill="#ff0000"/>
<rect x="631" y="298" width="1" height="40" fill="#008000"/>
<rect x="630" y="307" width="3" height="23" fill="#008000"/>
<rect x="637" y="279" width="1" height="35" fill="#008000"/>
<rect x="636" y="306" width="3" height="1" fill="#008000"/>
<rect x="643" y="302" width="1" height="29" fill="#ff0000"/>
<rect x="642" y="307" width="3" height="17" fill="#ff0000"/>
<rect x="649" y="310" width="1" height="21" fill="#008000"/>
<rect x="648" y="312" width="3" height="12" fill="#008000"/>
<rect x="655" y="280" width="1" height="48" fill="#008000"/>
<rect x="654" y="281" width="3" height="33" fill="#008000"/>
<rect x="660" y="310" width="1" height="35" fill="#ff0000"/>
<rect x="659" y="310" width="3" height="34" fill="#ff0000"/>
<rect x="666" y="341" width="1" height="35" fill="#008000"/>
<rect x="665" y="353" width="3" height="3" fill="#008000"/>
<rect x="672" y="344" width="1" height="32" fill="#008000"/>
<rect x="671" y="354" width="3" height="1" fill="#008000"/>
<rect x="678" y="334" width="1" height="23" fill="#008000"/>
<rect x="677" y="337" width="3" height="17" fill="#008000"/>
<rect x="684" y="331" width="1" height="12" fill="#008000"/>
<rect x="683" y="332" width="3" height="11" fill="#008000"/>
<rect x="690" y="300" width="1" height="33" fill="#008000"/>
<rect x="689" y="301" width="3" height="32" fill="#008000"/>
<rect x="696" y="295" width="1" height="16" fill="#ff0000"/>
<rect x="695" y="299" width="3" height="8" fill="#ff0000"/>
<rect x="702" y="287" width="1" height="32" fill="#ff0000"/>
<rect x="701" y="299" width="3" height="19" fill="#ff0000"/>
<rect x="708" y="307" width="1" height="24" fill="#008000"/>
<rect x="707" y="312" width="3" height="8" fill="#008000"/>
<rect x="714" y="302" width="1" height="9" fill="#008000"/>
<rect x="713" y="303" width="3" height="7" fill="#008000"/>
<rect x="720" y="291" width="1" height="14" fill="#008000"/>
<rect x="719" y="292" width="3" height="10" fill="#008000"/>
<rect x="726" y="286" width="1" height="8" fill="#ff0000"/>
<rect x="725" y="288" width="3" height="5" fill="#ff0000"/>
<rect x="732" y="289" width="1" height="8" fill="#008000"/>
<rect x="731" y="293" width="3" height="1" fill="#008000"/>
<rect x="738" y="287" width="1" height="53" fill="#008000"/>
<rect x="737" y="293" width="3" height="28" fill="#008000"/>
<rect x="744" y="257" width="1" height="35" fill="#ff0000"/>
<rect x="743" y="280" width="3" height="10" fill="#ff0000"/>
<rect x="750" y="272" width="1" height="16" fill="#008000"/>
<rect x="749" y="274" width="3" height="13" fill="#008000"/>
<rect x="756" y="260" width="1" height="10" fill="#008000"/>
<rect x="755" y="261" width="3" height="9" fill="#008000"/>
<rect x="762" y="255" width="1" height="10" fill="#008000"/>
<rect x="761" y="258" width="3" height="1" fill="#008000"/>
<rect x="767" y="253" width="1" height="12" fill="#ff0000"/>
<rect x="766" y="257" width="3" height="8" fill="#ff0000"/>
<rect x="773" y="262" width="1" height="17" fill="#ff0000"/>
<rect x="772" y="263" width="3" height="14" fill="#ff0000"/>
<rect x="779" y="274" width="1" height="18" fill="#ff0000"/>
<rect x="778" y="274" width="3" height="16" fill="#ff0000"/>
<rect x="785" y="285" width="1" height="16" fill="#ff0000"/>
<rect x="784" y="289" width="3" height="1" fill="#ff0000"/>
<rect x="791" y="283" width="1" height="19" fill="#ff0000"/>
<rect x="790" y="285" width="3" height="16" fill="#ff0000"/>
<rect x="797" y="301" width="1" height="10" fill="#ff0000"/>
<rect x="796" y="302" width="3" height="8" fill="#ff0000"/>
<rect x="803" y="307" width="1" height="46" fill="#ff0000"/>
<rect x="802" y="309" width="3" height="42" fill="#ff0000"/>
<rect x="809" y="338" width="1" height="17" fill="#008000"/>
<rect x="808" y="341" width="3" height="10" fill="#008000"/>
<rect x="815" y="340" width="1" height="35" fill="#ff0000"/>
<rect x="814" y="341" width="3" height="31" fill="#ff0000"/>
<rect x="821" y="371" width="1" height="25" fill="#ff0000"/>
<rect x="820" y="372" width="3" height="2" fill="#ff0000"/>
<rect x="827" y="372" width="1" height="33" fill="#ff0000"/>
<rect x="826" y="373" width="3" height="29" fill="#ff0000"/>
<rect x="833" y="398" width="1" height="36" fill="#ff0000"/>
<rect x="832" y="403" width="3" height="3" fill="#ff0000"/>
<rect x="839" y="378" width="1" height="29" fill="#008000"/>
<rect x="838" y="379" width="3" height="26" fill="#008000"/>
<rect x="845" y="371" width="1" height="31" fill="#ff0000"/>
<rect x="844" y="377" width="3" height="22" fill="#ff0000"/>
<rect x="851" y="384" width="1" height="27" fill="#008000"/>
<rect x="850" y="387" width="3" height="13" fill="#008000"/>
<rect x="857" y="388" width="1" height="24" fill="#ff0000"/>
<rect x="856" y="391" width="3" height="15" fill="#ff0000"/>
<rect x="863" y="411" width="1" height="23" fill="#ff0000"/>
<rect x="862" y="412" width="3" height="17" fill="#ff0000"/>
<rect x="869" y="418" width="1" height="16" fill="#008000"/>
<rect x="868" y="425" width="3" height="9" fill="#008000"/>
<rect x="874" y="424" width="1" height="16" fill="#008000"/>
<rect x="873" y="428" width="3" height="2" fill="#008000"/>
<rect x="880" y="410" width="1" height="23" fill="#008000"/>
<rect x="879" y="411" width="3" height="21" fill="#008000"/>
<rect x="886" y="404" width="1" height="21" fill="#ff0000"/>
<rect x="885" y="410" width="3" height="13" fill="#ff0000"/>
<rect x="892" y="421" width="1" height="24" fill="#ff0000"/>
<rect x="891" y="424" width="3" height="12" fill="#ff0000"/>
<rect x="898" y="416" width="1" height="14" fill="#008000"/>
<rect x="897" y="423" width="3" height="6" fill="#008000"/>
<rect x="904" y="418" width="1" height="16" fill="#ff0000"/>
<rect x="903" y="419" width="3" height="13" fill="#ff0000"/>
<rect x="910" y="422" width="1" height="13" fill="#008000"/>
<rect x="909" y="426" width="3" height="2" fill="#008000"/>
<rect x="916" y="395" width="1" height="29" fill="#008000"/>
<rect x="915" y="396" width="3" height="27" fill="#008000"/>
<rect x="922" y="384" width="1" height="17" fill="#008000"/>
<rect x="921" y="386" width="3" height="9" fill="#008000"/>
<rect x="928" y="376" width="1" height="15" fill="#008000"/>
<rect x="927" y="383" width="3" height="3" fill="#008000"/>
<rect x="934" y="379" width="1" height="13" fill="#008000"/>
<rect x="933" y="381" width="3" height="1" fill="#008000"/>
<rect x="940" y="368" width="1" height="13" fill="#008000"/>
<rect x="939" y="369" width="3" height="12" fill="#008000"/>
<rect x="946" y="364" width="1" height="9" fill="#008000"/>
<rect x="945" y="366" width="3" height="1" fill="#008000"/>
<rect x="952" y="365" width="1" height="21" fill="#ff0000"/>
<rect x="951" y="367" width="3" height="17" fill="#ff0000"/>
<rect x="958" y="379" width="1" height="11" fill="#ff0000"/>
<rect x="957" y="383" width="3" height="2" fill="#ff0000"/>
<rect x="964" y="374" width="1" height="13" fill="#ff0000"/>
<rect x="963" y="382" width="3" height="3" fill="#ff0000"/>
<rect x="970" y="378" width="1" height="10" fill="#ff0000"/>
<rect x="969" y="381" width="3" height="6" fill="#ff0000"/>
<rect x="976" y="387" width="1" height="14" fill="#ff0000"/>
<rect x="975" y="389" width="3" height="9" fill="#ff0000"/>
<rect x="981" y="392" width="1" height="8" fill="#008000"/>
<rect x="980" y="395" width="3" height="2" fill="#008000"/>
<rect x="987" y="390" width="1" height="7" fill="#008000"/>
<rect x="986" y="393" width="3" height="2" fill="#008000"/>
<rect x="993" y="393" width="1" height="15" fill="#ff0000"/>
<rect x="992" y="394" width="3" height="12" fill="#ff0000"/>
<rect x="999" y="404" width="1" height="31" fill="#ff0000"/>
<rect x="998" y="404" width="3" height="28" fill="#ff0000"/>
<rect x="1005" y="430" width="1" height="38" fill="#ff0000"/>
<rect x="1004" y="432" width="3" height="18" fill="#ff0000"/>
<rect x="1011" y="440" width="1" height="23" fill="#ff0000"/>
<rect x="1010" y="448" width="3" height="2" fill="#ff0000"/>
<rect x="1017" y="425" width="1" height="25" fill="#008000"/>
<rect x="1016" y="426" width="3" height="24" fill="#008000"/>
<rect x="1023" y="425" width="1" height="9" fill="#ff0000"/>
<rect x="1022" y="426" width="3" height="6" fill="#ff0000"/>
<rect x="1029" y="430" width="1" height="23" fill="#ff0000"/>
<rect x="1028" y="431" width="3" height="15" fill="#ff0000"/>
<rect x="1035" y="441" width="1" height="14" fill="#ff0000"/>
<rect x="1034" y="446" width="3" height="3" fill="#ff0000"/>
<rect x="1041" y="440" width="1" height="28" fill="#ff0000"/>
<rect x="1040" y="447" width="3" height="11" fill="#ff0000"/>
<rect x="1047" y="457" width="1" height="22" fill="#ff0000"/>
<rect x="1046" y="458" width="3" height="11" fill="#ff0000"/>
<rect x="1053" y="440" width="1" height="24" fill="#008000"/>
<rect x="1052" y="441" width="3" height="23" fill="#008000"/>
<rect x="1059" y="424" width="1" height="20" fill="#ff0000"/>
<rect x="1058" y="438" width="3" height="5" fill="#ff0000"/>
<rect x="1065" y="438" width="1" height="20" fill="#ff0000"/>
<rect x="1064" y="441" width="3" height="2" fill="#ff0000"/>
<rect x="1071" y="417" width="1" height="23" fill="#008000"/>
<rect x="1070" y="418" width="3" height="21" fill="#008000"/>
<rect x="1077" y="401" width="1" height="20" fill="#008000"/>
<rect x="1076" y="403" width="3" height="12" fill="#008000"/>
<rect x="1083" y="401" width="1" height="22" fill="#ff0000"/>
<rect x="1082" y="401" width="3" height="20" fill="#ff0000"/>
<rect x="1089" y="421" width="1" height="17" fill="#ff0000"/>
<rect x="1088" y="421" width="3" height="6" fill="#ff0000"/>
<rect x="1094" y="416" width="1" height="11" fill="#008000"/>
<rect x="1093" y="417" width="3" height="10" fill="#008000"/>
<rect x="1100" y="413" width="1" height="12" fill="#ff0000"/>
<rect x="1099" y="415" width="3" height="8" fill="#ff0000"/>
<rect x="1106" y="422" width="1" height="16" fill="#ff0000"/>
<rect x="1105" y="423" width="3" height="9" fill="#ff0000"/>
<rect x="1112" y="430" width="1" height="27" fill="#ff0000"/>
<rect x="1111" y="430" width="3" height="25" fill="#ff0000"/>
<rect x="1118" y="455" width="1" height="22" fill="#ff0000"/>
<rect x="1117" y="455" width="3" height="19" fill="#ff0000"/>
<rect x="1124" y="447" width="1" height="26" fill="#008000"/>
<rect x="1123" y="450" width="3" height="23" fill="#008000"/>
<rect x="1130" y="439" width="1" height="15" fill="#ff0000"/>
<rect x="1129" y="449" width="3" height="1" fill="#ff0000"/>
<rect x="1136" y="431" width="1" height="20" fill="#008000"/>
<rect x="1135" y="433" width="3" height="16" fill="#008000"/>
<rect x="1142" y="428" width="1" height="9" fill="#ff0000"/>
<rect x="1141" y="429" width="3" height="7" fill="#ff0000"/>
<rect x="1148" y="427" width="1" height="8" fill="#ff0000"/>
<rect x="1147" y="431" width="3" height="3" fill="#ff0000"/>
<rect x="1154" y="425" width="1" height="11" fill="#008000"/>
<rect x="1153" y="427" width="3" height="7" fill="#008000"/>
<rect x="1160" y="410" width="1" height="14" fill="#008000"/>
<rect x="1159" y="411" width="3" height="12" fill="#008000"/>
<rect x="1166" y="410" width="1" height="14" fill="#ff0000"/>
<rect x="1165" y="410" width="3" height="13" fill="#ff0000"/>
<rect x="1172" y="422" width="1" height="9" fill="#ff0000"/>
<rect x="1171" y="422" width="3" height="6" fill="#ff0000"/>
<rect x="1178" y="425" width="1" height="12" fill="#ff0000"/>
<rect x="1177" y="429" width="3" height="8" fill="#ff0000"/>
<rect x="1184" y="437" width="1" height="10" fill="#ff0000"/>
<rect x="1183" y="440" width="3" height="5" fill="#ff0000"/>
<rect x="1190" y="438" width="1" height="7" fill="#008000"/>
<rect x="1189" y="440" width="3" height="4" fill="#008000"/>
<rect x="1196" y="437" width="1" height="9" fill="#008000"/>
<rect x="1195" y="439" width="3" height="1" fill="#008000"/>
<rect x="1201" y="438" width="1" height="19" fill="#ff0000"/>
<rect x="1200" y="439" width="3" height="16" fill="#ff0000"/>
<rect x="1207" y="447" width="1" height="10" fill="#008000"/>
<rect x="1206" y="448" width="3" height="6" fill="#008000"/>
<rect x="1213" y="442" width="1" height="9" fill="#ff0000"/>
<rect x="1212" y="444" width="3" height="2" fill="#ff0000"/>
<rect x="1219" y="443" width="1" height="16" fill="#ff0000"/>
<rect x="1218" y="444" width="3" height="13" fill="#ff0000"/>
<rect x="1225" y="453" width="1" height="9" fill="#ff0000"/>
<rect x="1224" y="455" width="3" height="2" fill="#ff0000"/>
<rect x="1231" y="459" width="1" height="7" fill="#ff0000"/>
<rect x="1230" y="459" width="3" height="5" fill="#ff0000"/>
<rect x="1237" y="460" width="1" height="16" fill="#ff0000"/>
<rect x="1236" y="461" width="3" height="14" fill="#ff0000"/>
<rect x="1243" y="470" width="1" height="10" fill="#008000"/>
<rect x="1242" y="473" width="3" height="1" fill="#008000"/>
<rect x="1249" y="461" width="1" height="12" fill="#008000"/>
<rect x="1248" y="463" width="3" height="9" fill="#008000"/>
<rect x="1255" y="460" width="1" height="6" fill="#008000"/>
<rect x="1254" y="462" width="3" height="1" fill="#008000"/>
<rect x="1261" y="461" width="1" height="7" fill="#ff0000"/>
<rect x="1260" y="461" width="3" height="5" fill="#ff0000"/>
<rect x="1267" y="462" width="1" height="8" fill="#ff0000"/>
<rect x="1266" y="465" width="3" height="2" fill="#ff0000"/>
<rect x="1273" y="467" width="1" height="33" fill="#ff0000"/>
<rect x="1272" y="467" width="3" height="33" fill="#ff0000"/>
<rect x="1279" y="483" width="1" height="27" fill="#008000"/>
<rect x="1278" y="490" width="3" height="13" fill="#008000"/>
<rect x="1285" y="480" width="1" height="32" fill="#ff0000"/>
<rect x="1284" y="491" width="3" height="18" fill="#ff0000"/>
<rect x="1291" y="504" width="1" height="26" fill="#008000"/>
<rect x="1290" y="508" width="3" height="1" fill="#008000"/>
<rect x="1297" y="496" width="1" height="10" fill="#008000"/>
<rect x="1296" y="497" width="3" height="7" fill="#008000"/>
<rect x="1303" y="498" width="1" height="17" fill="#ff0000"/>
<rect x="1302" y="498" width="3" height="16" fill="#ff0000"/>
<rect x="1308" y="495" width="1" height="22" fill="#008000"/>
<rect x="1307" y="503" width="3" height="12" fill="#008000"/>
<rect x="1314" y="501" width="1" height="11" fill="#ff0000"/>
<rect x="1313" y="502" width="3" height="8" fill="#ff0000"/>
<rect x="1320" y="509" width="1" height="20" fill="#ff0000"/>
<rect x="1319" y="509" width="3" height="17" fill="#ff0000"/>
<rect x="1326" y="512" width="1" height="12" fill="#008000"/>
<rect x="1325" y="515" width="3" height="8" fill="#008000"/>
<rect x="1332" y="498" width="1" height="23" fill="#008000"/>
<rect x="1331" y="501" width="3" height="14" fill="#008000"/>
<rect x="1338" y="477" width="1" height="25" fill="#008000"/>
<rect x="1337" y="480" width="3" height="20" fill="#008000"/>
<rect x="1344" y="472" width="1" height="13" fill="#008000"/>
<rect x="1343" y="477" width="3" height="1" fill="#008000"/>
<rect x="1350" y="458" width="1" height="18" fill="#008000"/>
<rect x="1349" y="459" width="3" height="17" fill="#008000"/>
<rect x="1356" y="451" width="1" height="13" fill="#008000"/>
<rect x="1355" y="453" width="3" height="4" fill="#008000"/>
<rect x="1362" y="448" width="1" height="8" fill="#008000"/>
<rect x="1361" y="451" width="3" height="2" fill="#008000"/>
<rect x="1368" y="440" width="1" height="19" fill="#008000"/>
<rect x="1367" y="444" width="3" height="12" fill="#008000"/>
<rect x="1374" y="418" width="1" height="30" fill="#008000"/>
<rect x="1373" y="420" width="3" height="25" fill="#008000"/>
<rect x="1380" y="411" width="1" height="16" fill="#008000"/>
<rect x="1379" y="418" width="3" height="1" fill="#008000"/>
<rect x="1386" y="407" width="1" height="11" fill="#008000"/>
<rect x="1385" y="408" width="3" height="10" fill="#008000"/>
<rect x="1392" y="388" width="1" height="23" fill="#008000"/>
<rect x="1391" y="390" width="3" height="20" fill="#008000"/>
<rect x="1398" y="369" width="1" height="19" fill="#008000"/>
<rect x="1397" y="373" width="3" height="14" fill="#008000"/>
<rect x="1404" y="370" width="1" height="20" fill="#ff0000"/>
<rect x="1403" y="371" width="3" height="11" fill="#ff0000"/>
<rect x="1410" y="357" width="1" height="24" fill="#008000"/>
<rect x="1409" y="358" width="3" height="23" fill="#008000"/>
<rect x="1415" y="352" width="1" height="20" fill="#ff0000"/>
<rect x="1414" y="355" width="3" height="11" fill="#ff0000"/>
<rect x="1421" y="364" width="1" height="20" fill="#ff0000"/>
<rect x="1420" y="364" width="3" height="15" fill="#ff0000"/>
<rect x="1427" y="379" width="1" height="18" fill="#ff0000"/>
<rect x="1426" y="379" width="3" height="17" fill="#ff0000"/>
<rect x="1433" y="372" width="1" height="25" fill="#008000"/>
<rect x="1432" y="378" width="3" height="18" fill="#008000"/>
<rect x="1439" y="365" width="1" height="15" fill="#008000"/>
<rect x="1438" y="366" width="3" height="13" fill="#008000"/>
<rect x="1445" y="347" width="1" height="25" fill="#ff0000"/>
<rect x="1444" y="358" width="3" height="2" fill="#ff0000"/>
<rect x="1451" y="341" width="1" height="19" fill="#008000"/>
<rect x="1450" y="342" width="3" height="17" fill="#008000"/>
<rect x="1457" y="320" width="1" height="24" fill="#008000"/>
<rect x="1456" y="321" width="3" height="21" fill="#008000"/>
<rect x="1463" y="320" width="1" height="15" fill="#008000"/>
<rect x="1462" y="322" width="3" height="1" fill="#008000"/>
<rect x="1469" y="305" width="1" height="21" fill="#008000"/>
<rect x="1468" y="316" width="3" height="1" fill="#008000"/>
<rect x="1475" y="313" width="1" height="13" fill="#ff0000"/>
<rect x="1474" y="315" width="3" height="10" fill="#ff0000"/>
<rect x="1481" y="323" width="1" height="19" fill="#ff0000"/>
<rect x="1480" y="324" width="3" height="8" fill="#ff0000"/>
<rect x="1487" y="322" width="1" height="16" fill="#ff0000"/>
<rect x="1486" y="326" width="3" height="9" fill="#ff0000"/>
<rect x="1493" y="331" width="1" height="14" fill="#ff0000"/>
<rect x="1492" y="333" width="3" height="9" fill="#ff0000"/>
<rect x="1499" y="332" width="1" height="15" fill="#ff0000"/>
<rect x="1498" y="340" width="3" height="6" fill="#ff0000"/>
<rect x="1505" y="335" width="1" height="10" fill="#008000"/>
<rect x="1504" y="340" width="3" height="4" fill="#008000"/>
<rect x="1511" y="330" width="1" height="10" fill="#ff0000"/>
<rect x="1510" y="337" width="3" height="2" fill="#ff0000"/>
<rect x="1517" y="346" width="1" height="16" fill="#ff0000"/>
<rect x="1516" y="349" width="3" height="1" fill="#ff0000"/>
<rect x="1522" y="339" width="1" height="9" fill="#008000"/>
<rect x="1521" y="345" width="3" height="1" fill="#008000"/>
<rect x="1528" y="343" width="1" height="16" fill="#ff0000"/>
<rect x="1527" y="346" width="3" height="12" fill="#ff0000"/>
<rect x="1534" y="352" width="1" height="16" fill="#008000"/>
<rect x="1533" y="353" width="3" height="8" fill="#008000"/>
<rect x="1540" y="350" width="1" height="13" fill="#ff0000"/>
<rect x="1539" y="353" width="3" height="8" fill="#ff0000"/>
<rect x="1546" y="351" width="1" height="10" fill="#008000"/>
<rect x="1545" y="357" width="3" height="2" fill="#008000"/>
<rect x="1552" y="354" width="1" height="17" fill="#ff0000"/>
<rect x="1551" y="357" width="3" height="10" fill="#ff0000"/>
<rect x="1558" y="362" width="1" height="18" fill="#ff0000"/>
<rect x="1557" y="365" width="3" height="13" fill="#ff0000"/>
<rect x="1564" y="356" width="1" height="23" fill="#008000"/>
<rect x="1563" y="358" width="3" height="20" fill="#008000"/>
<rect x="1570" y="349" width="1" height="12" fill="#ff0000"/>
<rect x="1569" y="353" width="3" height="7" fill="#ff0000"/>
<rect x="1576" y="359" width="1" height="19" fill="#ff0000"/>
<rect x="1575" y="360" width="3" height="9" fill="#ff0000"/>
<rect x="1582" y="358" width="1" height="23" fill="#ff0000"/>
<rect x="1581" y="359" width="3" height="22" fill="#ff0000"/>
<rect x="1588" y="358" width="1" height="37" fill="#008000"/>
<rect x="1587" y="359" width="3" height="27" fill="#008000"/>
<rect x="1594" y="353" width="1" height="23" fill="#ff0000"/>
<rect x="1593" y="356" width="3" height="14" fill="#ff0000"/>
<rect x="1600" y="362" width="1" height="22" fill="#ff0000"/>
<rect x="1599" y="362" width="3" height="20" fill="#ff0000"/>
<rect x="1606" y="373" width="1" height="16" fill="#008000"/>
<rect x="1605" y="376" width="3" height="4" fill="#008000"/>
<rect x="1612" y="367" width="1" height="10" fill="#008000"/>
<rect x="1611" y="368" width="3" height="8" fill="#008000"/>
<rect x="1618" y="358" width="1" height="14" fill="#008000"/>
<rect x="1617" y="362" width="3" height="8" fill="#008000"/>
<rect x="1624" y="354" width="1" height="10" fill="#008000"/>
<rect x="1623" y="355" width="3" height="6" fill="#008000"/>
<rect x="1629" y="351" width="1" height="6" fill="#008000"/>
<rect x="1628" y="352" width="3" height="1" fill="#008000"/>
<rect x="1635" y="346" width="1" height="11" fill="#ff0000"/>
<rect x="1634" y="351" width="3" height="6" fill="#ff0000"/>
<rect x="1641" y="355" width="1" height="9" fill="#ff0000"/>
<rect x="1640" y="356" width="3" height="7" fill="#ff0000"/>
<rect x="1647" y="363" width="1" height="16" fill="#ff0000"/>
<rect x="1646" y="364" width="3" height="10" fill="#ff0000"/>
<rect x="1653" y="372" width="1" height="8" fill="#ff0000"/>
<rect x="1652" y="374" width="3" height="2" fill="#ff0000"/>
<rect x="1659" y="362" width="1" height="14" fill="#008000"/>
<rect x="1658" y="363" width="3" height="13" fill="#008000"/>
<rect x="1665" y="356" width="1" height="10" fill="#008000"/>
<rect x="1664" y="357" width="3" height="8" fill="#008000"/>
<rect x="1671" y="359" width="1" height="6" fill="#ff0000"/>
<rect x="1670" y="359" width="3" height="6" fill="#ff0000"/>
<rect x="1677" y="362" width="1" height="3" fill="#008000"/>
<rect x="1676" y="362" width="3" height="2" fill="#008000"/>
<rect x="1683" y="361" width="1" height="6" fill="#ff0000"/>
<rect x="1682" y="362" width="3" height="4" fill="#ff0000"/>
<rect x="1689" y="358" width="1" height="8" fill="#008000"/>
<rect x="1688" y="361" width="3" height="3" fill="#008000"/>
<rect x="1695" y="336" width="1" height="26" fill="#008000"/>
<rect x="1694" y="338" width="3" height="23" fill="#008000"/>
<rect x="1701" y="323" width="1" height="12" fill="#008000"/>
<rect x="1700" y="326" width="3" height="8" fill="#008000"/>
<rect x="1707" y="317" width="1" height="12" fill="#008000"/>
<rect x="1706" y="318" width="3" height="10" fill="#008000"/>
<rect x="1713" y="315" width="1" height="10" fill="#008000"/>
<rect x="1712" y="317" width="3" height="2" fill="#008000"/>
<rect x="1719" y="309" width="1" height="11" fill="#ff0000"/>
<rect x="1718" y="315" width="3" height="3" fill="#ff0000"/>
<rect x="1725" y="312" width="1" height="8" fill="#008000"/>
<rect x="1724" y="313" width="3" height="5" fill="#008000"/>
<rect x="1731" y="303" width="1" height="12" fill="#008000"/>
<rect x="1730" y="304" width="3" height="10" fill="#008000"/>
<rect x="1737" y="301" width="1" height="6" fill="#008000"/>
<rect x="1736" y="301" width="3" height="3" fill="#008000"/>
<rect x="17" y="284" width="358" height="2" fill="#ff0000"/><rect x="458" y="284" width="1368" height="2" fill="#ff0000"/>
<rect x="17" y="300" width="364" height="2" fill="#ff0000"/><rect x="465" y="300" width="1361" height="2" fill="#ff0000"/>
<rect x="17" y="320" width="447" height="2" fill="#008000"/><rect x="547" y="320" width="1279" height="2" fill="#008000"/>
<rect x="17" y="328" width="382" height="2" fill="#008000"/><rect x="481" y="328" width="1345" height="2" fill="#008000"/>
<text x="381" y="292" font-family='"Liberation Sans", sans-serif' font-size="16" fill="#ff0000" textLength="72" lengthAdjust="spacingAndGlyphs">46,139.45</text>
<text x="387" y="307.5" font-family='"Liberation Sans", sans-serif' font-size="16" fill="#ff0000" textLength="72" lengthAdjust="spacingAndGlyphs">45,580.82</text>
<text x="470" y="327.5" font-family='"Liberation Sans", sans-serif' font-size="16" fill="#008000" textLength="72" lengthAdjust="spacingAndGlyphs">44,917.45</text>
<text x="404.5" y="335.3" font-family='"Liberation Sans", sans-serif' font-size="16" fill="#008000" textLength="71.5" lengthAdjust="spacingAndGlyphs">44,638.14</text>
<line x1="1320.6" y1="529" x2="1830" y2="302" stroke="#008000" stroke-width="2.2" shape-rendering="crispEdges"/>
<polyline points="1394,307.8 1500,305 1700,301.5 1735,301" fill="none" stroke="#008000" stroke-width="2" shape-rendering="crispEdges"/>
<polyline points="1427,397.5 1600,395.5 1767,393" fill="none" stroke="#008000" stroke-width="2" shape-rendering="crispEdges"/>
</g>
<rect x="16" y="30" width="1811" height="1" fill="#505050"/>
<rect x="16" y="30" width="1" height="754" fill="#505050"/>
<rect x="1826" y="30" width="1" height="754" fill="#505050"/>
<rect x="1826" y="115" width="6" height="1" fill="#000"/>
<text x="1834.7" y="121.2" font-family='"Liberation Sans", sans-serif' font-size="16" fill="#000" textLength="48.3" lengthAdjust="spacingAndGlyphs">52,000</text>
<rect x="1826" y="144" width="6" height="1" fill="#000"/>
<text x="1834.7" y="150.3" font-family='"Liberation Sans", sans-serif' font-size="16" fill="#000" textLength="48.3" lengthAdjust="spacingAndGlyphs">51,000</text>
<rect x="1826" y="173" width="6" height="1" fill="#000"/>
<text x="1834.5" y="179.4" font-family='"Liberation Sans", sans-serif' font-weight="bold" font-size="16" fill="#000" textLength="59" lengthAdjust="spacingAndGlyphs">50,000</text>
<rect x="1826" y="202" width="6" height="1" fill="#000"/>
<text x="1834.7" y="208.5" font-family='"Liberation Sans", sans-serif' font-size="16" fill="#000" textLength="48.3" lengthAdjust="spacingAndGlyphs">49,000</text>
<rect x="1826" y="231" width="6" height="1" fill="#000"/>
<text x="1834.7" y="237.6" font-family='"Liberation Sans", sans-serif' font-size="16" fill="#000" textLength="48.3" lengthAdjust="spacingAndGlyphs">48,000</text>
<rect x="1826" y="260" width="6" height="1" fill="#000"/>
<text x="1834.7" y="266.7" font-family='"Liberation Sans", sans-serif' font-size="16" fill="#000" textLength="48.3" lengthAdjust="spacingAndGlyphs">47,000</text>
<rect x="1826" y="289" width="6" height="1" fill="#000"/>
<rect x="1826" y="318" width="6" height="1" fill="#000"/>
<text x="1834.7" y="324.9" font-family='"Liberation Sans", sans-serif' font-size="16" fill="#000" textLength="48.3" lengthAdjust="spacingAndGlyphs">45,000</text>
<rect x="1826" y="347" width="6" height="1" fill="#000"/>
<rect x="1826" y="376" width="6" height="1" fill="#000"/>
<text x="1834.7" y="383.0" font-family='"Liberation Sans", sans-serif' font-size="16" fill="#000" textLength="48.3" lengthAdjust="spacingAndGlyphs">43,000</text>
<rect x="1826" y="405" width="6" height="1" fill="#000"/>
<text x="1834.7" y="412.1" font-family='"Liberation Sans", sans-serif' font-size="16" fill="#000" textLength="48.3" lengthAdjust="spacingAndGlyphs">42,000</text>
<rect x="1826" y="435" width="6" height="1" fill="#000"/>
<text x="1834.7" y="441.2" font-family='"Liberation Sans", sans-serif' font-size="16" fill="#000" textLength="48.3" lengthAdjust="spacingAndGlyphs">41,000</text>
<rect x="1826" y="464" width="6" height="1" fill="#000"/>
<text x="1834.5" y="470.3" font-family='"Liberation Sans", sans-serif' font-weight="bold" font-size="16" fill="#000" textLength="59" lengthAdjust="spacingAndGlyphs">40,000</text>
<rect x="1826" y="493" width="6" height="1" fill="#000"/>
<text x="1834.7" y="499.4" font-family='"Liberation Sans", sans-serif' font-size="16" fill="#000" textLength="48.3" lengthAdjust="spacingAndGlyphs">39,000</text>
<rect x="1826" y="522" width="6" height="1" fill="#000"/>
<text x="1834.7" y="528.5" font-family='"Liberation Sans", sans-serif' font-size="16" fill="#000" textLength="48.3" lengthAdjust="spacingAndGlyphs">38,000</text>
<rect x="1826" y="551" width="6" height="1" fill="#000"/>
<text x="1833" y="64.2" font-family='"Liberation Sans", sans-serif' font-weight="bold" font-size="16" fill="#000" textLength="41" lengthAdjust="spacingAndGlyphs">Price</text>
<text x="1831.7" y="86.9" font-family='"Liberation Sans", sans-serif' font-weight="bold" font-size="16" fill="#000" textLength="34.5" lengthAdjust="spacingAndGlyphs">PKR</text>
<rect x="1827" y="271" width="84" height="21" fill="#0c3d45"/>
<text x="1827" y="288" font-family='"Liberation Sans", sans-serif' font-size="16" fill="#fff" textLength="72.5" lengthAdjust="spacingAndGlyphs">45,748.78</text>
<rect x="1827" y="292" width="84" height="20.5" fill="#ff0000"/>
<text x="1827" y="308.5" font-family='"Liberation Sans", sans-serif' font-weight="bold" font-size="16" fill="#000" textLength="86" lengthAdjust="spacingAndGlyphs">45,560.30</text>
<rect x="1827" y="334" width="84" height="21" fill="#0c3d45"/>
<text x="1827" y="351" font-family='"Liberation Sans", sans-serif' font-size="16" fill="#fff" textLength="72.5" lengthAdjust="spacingAndGlyphs">44,096.55</text>
<rect x="1827" y="382" width="84" height="21" fill="#0a3a0a"/>
<text x="1827" y="399" font-family='"Liberation Sans", sans-serif' font-size="16" fill="#fff" textLength="72.5" lengthAdjust="spacingAndGlyphs">42,444.32</text>
<rect x="1833.5" y="548.5" width="42" height="20" fill="#fff" stroke="#000" stroke-width="1"/>
<text x="1835" y="565" font-family='"Liberation Sans", sans-serif' font-weight="bold" font-size="16" fill="#000" textLength="38" lengthAdjust="spacingAndGlyphs">Auto</text>
<rect x="1881.5" y="32.5" width="12.5" height="12.5" rx="2" fill="#dce8f5" stroke="#5a7090" stroke-width="1.2"/>
<rect x="1883" y="34.3" width="9.3" height="8.2" fill="#ffffff" stroke="#404858" stroke-width="1"/>
<rect x="1885.5" y="37.2" width="4.5" height="2.6" fill="#a8c8e8" stroke="#404858" stroke-width="1"/>
<rect x="1896.5" y="32.5" width="12.5" height="12.5" rx="2" fill="#f2c0b0" stroke="#4a1020" stroke-width="1.2"/>
<path d="M1898.5 37 L1901 38.8 L1898.5 40.6 Z M1907 37 L1904.5 38.8 L1907 40.6 Z" fill="#e05a3a"/>
<path d="M1898.8 35 L1906.8 42.6 M1906.8 35 L1898.8 42.6" stroke="#404858" stroke-width="3.2"/>
<path d="M1898.8 35 L1906.8 42.6 M1906.8 35 L1898.8 42.6" stroke="#f4f4f4" stroke-width="1.6"/>
<rect x="1881.5" y="573.5" width="12.5" height="12.5" rx="2" fill="#dce8f5" stroke="#5a7090" stroke-width="1.2"/>
<rect x="1883" y="575.3" width="9.3" height="8.2" fill="#ffffff" stroke="#404858" stroke-width="1"/>
<rect x="1885.5" y="578.2" width="4.5" height="2.6" fill="#a8c8e8" stroke="#404858" stroke-width="1"/>
<rect x="1896.5" y="573.5" width="12.5" height="12.5" rx="2" fill="#f2c0b0" stroke="#4a1020" stroke-width="1.2"/>
<path d="M1898.5 578 L1901 579.8 L1898.5 581.6 Z M1907 578 L1904.5 579.8 L1907 581.6 Z" fill="#e05a3a"/>
<path d="M1898.8 576 L1906.8 583.6 M1906.8 576 L1898.8 583.6" stroke="#404858" stroke-width="3.2"/>
<path d="M1898.8 576 L1906.8 583.6 M1906.8 576 L1898.8 583.6" stroke="#f4f4f4" stroke-width="1.6"/>
<rect x="1881.5" y="656.5" width="12.5" height="12.5" rx="2" fill="#dce8f5" stroke="#5a7090" stroke-width="1.2"/>
<rect x="1883" y="658.3" width="9.3" height="8.2" fill="#ffffff" stroke="#404858" stroke-width="1"/>
<rect x="1885.5" y="661.2" width="4.5" height="2.6" fill="#a8c8e8" stroke="#404858" stroke-width="1"/>
<rect x="1896.5" y="656.5" width="12.5" height="12.5" rx="2" fill="#f2c0b0" stroke="#4a1020" stroke-width="1.2"/>
<path d="M1898.5 661 L1901 662.8 L1898.5 664.6 Z M1907 661 L1904.5 662.8 L1907 664.6 Z" fill="#e05a3a"/>
<path d="M1898.8 659 L1906.8 666.6 M1906.8 659 L1898.8 666.6" stroke="#404858" stroke-width="3.2"/>
<path d="M1898.8 659 L1906.8 666.6 M1906.8 659 L1898.8 666.6" stroke="#f4f4f4" stroke-width="1.6"/>
<rect x="1881.5" y="724.5" width="12.5" height="12.5" rx="2" fill="#dce8f5" stroke="#5a7090" stroke-width="1.2"/>
<rect x="1883" y="726.3" width="9.3" height="8.2" fill="#ffffff" stroke="#404858" stroke-width="1"/>
<rect x="1885.5" y="729.2" width="4.5" height="2.6" fill="#a8c8e8" stroke="#404858" stroke-width="1"/>
<rect x="1896.5" y="724.5" width="12.5" height="12.5" rx="2" fill="#f2c0b0" stroke="#4a1020" stroke-width="1.2"/>
<path d="M1898.5 729 L1901 730.8 L1898.5 732.6 Z M1907 729 L1904.5 730.8 L1907 732.6 Z" fill="#e05a3a"/>
<path d="M1898.8 727 L1906.8 734.6 M1906.8 727 L1898.8 734.6" stroke="#404858" stroke-width="3.2"/>
<path d="M1898.8 727 L1906.8 734.6 M1906.8 727 L1898.8 734.6" stroke="#f4f4f4" stroke-width="1.6"/>
<text x="25" y="48.5" font-family='"Liberation Sans", sans-serif' font-size="16" fill="#ff0000" textLength="559" lengthAdjust="spacingAndGlyphs">Cndl, KSE 100 INX, 3/30/2018, 45,483.29, 45,604.59, 45,391.71, 45,560.30,</text>
<text x="592.1" y="48.5" font-family='"Liberation Sans", sans-serif' font-size="16" fill="#0000ff" textLength="140.5" lengthAdjust="spacingAndGlyphs">+70.68, (+0.16%),</text>
<text x="742.4" y="48.5" font-family='"Liberation Sans", sans-serif' font-size="16" fill="#0a4a55" textLength="406.5" lengthAdjust="spacingAndGlyphs">BBand, KSE 100 INX, 3/30/2018, 45,748.78, 44,096.55,</text>
<text x="1156" y="48.5" font-family='"Liberation Sans", sans-serif' font-size="16" fill="#0a3a0a" textLength="71.7" lengthAdjust="spacingAndGlyphs">42,444.32</text>
<rect x="0" y="569" width="1911" height="1" fill="#606060"/>
<rect x="0" y="652" width="1911" height="1" fill="#606060"/>
<rect x="0" y="721" width="1911" height="1" fill="#606060"/>
<rect x="16" y="783" width="1811" height="1" fill="#505050"/>
<g clip-path="url(#cr)">
<rect x="17" y="611" width="1809" height="1" fill="#ff0000"/><rect x="17" y="631" width="1809" height="1" fill="#ff0000"/>
<polyline points="16.0,614.3 41.1,615.1 63.6,615.1 73.7,616.1 91.2,617.6 111.3,620.6 131.4,623.1 143.9,621.1 156.4,620.1 171.5,620.1 186.5,622.6 206.6,624.8 221.6,622.6 234.2,623.1 251.7,625.1 266.8,625.6 284.3,627.6 311.9,625.1 334.5,627.6 352.1,623.1 367.1,619.3 382.1,618.8 402.2,619.3 417.3,616.1 442.3,613.0 467.4,615.1 482.5,614.1 490.0,613.5 500.0,615.6 522.6,621.1 552.7,622.6 562.7,625.1 590.3,629.3 605.4,629.3 625.4,629.3 640.5,629.3 653.0,626.8 665.5,628.6 680.6,628.1 690.6,626.8 715.7,624.3 740.8,622.6 760.8,620.1 775.9,620.6 790.9,621.8 811.0,625.6 831.1,628.6 851.1,629.3 861.2,630.1 881.2,630.1 911.3,628.1 931.4,625.1 948.9,622.6 960.0,622.3 980.1,623.1 995.1,624.3 1010.2,627.6 1035.2,628.1 1060.3,626.8 1075.4,623.6 1090.4,623.1 1105.5,623.1 1120.5,624.3 1140.6,623.1 1155.6,623.1 1165.6,621.1 1185.7,622.6 1205.8,623.1 1225.8,624.1 1245.9,625.6 1266.0,626.8 1286.0,628.1 1306.1,629.3 1321.1,629.3 1336.2,627.6 1340.0,626.1 1355.0,622.6 1372.6,619.3 1395.2,614.3 1415.2,611.0 1440.3,612.5 1460.4,610.5 1475.4,610.5 1495.5,613.0 1515.5,615.1 1535.6,617.6 1555.7,620.1 1580.8,621.8 1605.8,622.6 1635.9,620.1 1666.0,621.8 1686.1,621.1 1706.1,617.6 1721.2,616.1 1736.2,613.5" shape-rendering="crispEdges" fill="none" stroke="#5040ff" stroke-width="1"/>
<polyline points="16.0,616.8 21.0,616.1 38.6,616.1 63.6,614.3 68.7,615.1 77.4,621.1 83.7,619.3 93.7,623.1 111.3,622.6 123.8,625.6 131.4,626.1 136.4,623.8 143.9,617.6 151.4,618.6 161.5,620.1 166.5,617.6 174.0,620.6 186.5,625.6 201.6,627.3 214.1,623.6 221.6,621.3 231.7,621.3 241.7,624.3 256.8,628.1 266.8,626.1 274.3,626.8 281.8,630.6 291.9,625.6 306.9,621.8 319.4,626.8 332.0,630.6 347.0,616.8 357.1,613.5 372.1,616.1 377.1,617.6 389.7,622.3 397.2,620.1 412.2,613.5 424.8,612.3 439.8,609.3 447.3,613.0 462.4,618.1 477.4,613.5 487.5,612.3 490.0,613.0 495.0,613.5 505.0,618.6 517.6,628.1 522.6,628.1 530.1,623.6 537.6,623.1 547.7,623.1 557.7,627.6 562.7,629.3 580.3,630.1 590.3,632.6 595.3,634.4 605.4,629.3 612.9,626.8 620.4,628.1 625.4,630.1 632.9,628.6 640.5,629.3 648.0,627.6 654.3,624.3 660.5,628.1 673.1,629.3 680.6,627.6 690.6,623.6 698.2,623.1 708.2,624.3 718.2,621.8 740.8,621.8 750.8,618.6 758.3,617.1 765.9,618.1 778.4,620.6 790.9,622.6 801.0,625.6 806.0,630.1 809.7,628.6 816.0,630.6 828.6,633.1 836.1,630.6 846.1,630.1 851.1,628.6 856.1,629.3 878.7,628.6 886.2,629.3 896.3,630.1 911.3,628.1 921.3,623.1 931.4,621.3 938.9,619.6 943.9,619.6 948.9,621.8 960.0,622.3 972.5,623.6 985.1,623.6 995.1,626.8 1002.6,630.1 1010.2,630.6 1017.7,626.1 1025.2,626.8 1035.2,629.3 1045.3,630.1 1052.8,625.1 1065.3,625.1 1075.4,618.1 1085.4,622.1 1095.4,621.3 1102.9,622.6 1110.5,625.6 1118.0,629.3 1125.5,625.1 1135.5,622.6 1153.1,621.8 1159.4,618.6 1168.2,620.6 1180.7,623.1 1190.7,623.1 1200.8,624.3 1210.8,623.8 1220.8,624.8 1230.8,625.1 1238.4,627.6 1248.4,625.6 1255.9,625.6 1266.0,626.8 1271.0,629.3 1278.5,629.3 1286.0,630.6 1296.1,628.6 1303.6,629.3 1308.6,627.6 1318.6,629.3 1326.1,629.3 1336.2,623.6 1340.0,621.1 1352.5,618.1 1370.1,615.1 1375.1,612.3 1390.2,609.8 1397.7,608.5 1405.2,610.5 1410.2,609.3 1417.7,611.8 1427.8,616.1 1440.3,613.5 1455.4,610.0 1470.4,609.8 1480.4,611.8 1490.5,613.0 1500.5,616.1 1510.5,615.6 1520.6,616.8 1530.6,619.3 1545.6,620.1 1558.2,624.3 1565.7,620.1 1580.8,624.3 1588.3,621.1 1600.8,624.3 1615.9,621.1 1628.4,618.6 1640.9,621.8 1651.0,624.3 1661.0,621.8 1671.0,620.6 1686.1,620.6 1696.1,615.1 1706.1,612.3 1721.2,611.8 1731.2,610.5 1736.2,610.5" shape-rendering="crispEdges" fill="none" stroke="#ff0000" stroke-width="1"/>
</g>
<text x="25" y="590" font-family='"Liberation Sans", sans-serif' font-size="16" fill="#ff0000" textLength="281.6" lengthAdjust="spacingAndGlyphs">RSI, KSE 100 INX, 3/30/2018, 72.181,</text>
<text x="315.3" y="590" font-family='"Liberation Sans", sans-serif' font-size="16" fill="#5a3cf0" textLength="324.1" lengthAdjust="spacingAndGlyphs">EMA, RSI(KSE 100 INX), 3/30/2018, 66.225</text>
<text x="1832" y="605" font-family='"Liberation Sans", sans-serif' font-weight="bold" font-size="16" fill="#c8c8c8">Value</text>
<rect x="1827" y="600" width="84" height="21" fill="#ff0000"/>
<text x="1827" y="617" font-family='"Liberation Sans", sans-serif' font-weight="bold" font-size="16" fill="#000" textLength="59" lengthAdjust="spacingAndGlyphs">72.181</text>
<rect x="1827" y="621" width="84" height="20.5" fill="#5533ff"/>
<text x="1827" y="638" font-family='"Liberation Sans", sans-serif' font-size="16" fill="#000" textLength="49" lengthAdjust="spacingAndGlyphs">66.225</text>
<clipPath id="cauto"><rect x="1827" y="641.5" width="84" height="10.5"/></clipPath>
<g clip-path="url(#cauto)">
<rect x="1833.5" y="641.5" width="42" height="20" fill="#ffffff" stroke="#d8d8d8" stroke-width="1"/>
<text x="1835" y="654.5" font-family='"Liberation Sans", sans-serif' font-weight="bold" font-size="16" fill="#c8c8c8" textLength="38" lengthAdjust="spacingAndGlyphs">Auto</text>
</g>
<g clip-path="url(#cs)">
<rect x="17" y="686" width="1809" height="1" fill="#1e9bff"/><rect x="17" y="708" width="1809" height="1" fill="#1e9bff"/>
<path d="M16.0,705.3 C17.3,704.7 21.0,703.0 23.5,701.6 C26.0,700.1 27.7,698.9 31.0,696.6 C34.4,694.3 40.0,689.5 43.6,687.8 C47.1,686.1 48.6,685.3 52.4,686.5 C56.1,687.8 61.8,692.2 66.2,695.3 C70.5,698.5 74.9,703.5 78.7,705.3 C82.5,707.2 83.7,706.3 88.7,706.6 C93.7,706.9 103.8,707.9 108.8,707.1 C113.8,706.3 115.9,702.0 118.8,701.6 C121.7,701.2 123.0,704.6 126.3,704.6 C129.7,704.6 135.1,704.8 138.9,701.6 C142.6,698.4 146.0,688.1 148.9,685.3 C151.8,682.4 153.5,683.9 156.4,684.5 C159.4,685.2 163.1,687.0 166.5,689.0 C169.8,691.1 173.6,693.4 176.5,696.6 C179.4,699.7 180.7,705.8 184.0,707.9 C187.4,709.9 192.8,709.5 196.6,709.1 C200.3,708.7 203.3,707.9 206.6,705.3 C209.9,702.8 213.3,697.7 216.6,694.1 C220.0,690.4 223.7,685.0 226.7,683.5 C229.6,682.1 231.3,682.7 234.2,685.3 C237.1,687.9 240.9,694.7 244.2,699.1 C247.6,703.5 250.9,710.2 254.2,711.6 C257.6,713.1 260.9,709.3 264.3,707.9 C267.6,706.4 270.5,702.7 274.3,702.8 C278.1,703.0 283.1,709.2 286.8,708.6 C290.6,708.0 293.1,703.0 296.9,699.1 C300.6,695.2 306.1,687.2 309.4,685.3 C312.8,683.4 314.4,685.5 316.9,687.8 C319.4,690.1 321.7,695.2 324.5,699.1 C327.2,703.0 329.9,711.1 333.2,711.1 C336.6,711.1 341.0,703.4 344.5,699.1 C348.1,694.8 351.6,688.1 354.6,685.3 C357.5,682.4 359.2,682.2 362.1,682.0 C365.0,681.8 368.8,682.0 372.1,684.0 C375.5,686.0 378.8,689.3 382.1,694.1 C385.5,698.9 388.8,711.6 392.2,712.9 C395.5,714.1 398.9,705.6 402.2,701.6 C405.6,697.6 409.7,692.0 412.2,689.0 C414.7,686.1 413.1,685.3 417.3,684.0 C421.4,682.8 432.3,681.3 437.3,681.5 C442.3,681.7 442.8,680.3 447.3,685.3 C451.9,690.3 460.3,707.6 464.9,711.6 C469.5,715.6 471.2,713.9 474.9,709.1 C478.7,704.3 485.0,687.0 487.5,682.8 C490.0,678.5 488.7,683.1 490.0,683.5 C491.3,683.9 492.5,682.7 495.0,685.3 C497.5,687.9 501.7,694.9 505.0,699.1 C508.4,703.3 511.7,708.9 515.1,710.4 C518.4,711.8 520.9,710.6 525.1,707.9 C529.3,705.1 536.4,697.5 540.2,694.1 C543.9,690.6 545.2,687.9 547.7,687.0 C550.2,686.2 552.3,686.6 555.2,689.0 C558.1,691.5 562.3,698.3 565.2,701.6 C568.2,704.8 569.4,707.1 572.8,708.6 C576.1,710.1 581.5,709.7 585.3,710.4 C589.1,711.1 592.0,713.5 595.3,712.9 C598.7,712.2 601.6,710.9 605.4,706.6 C609.1,702.3 614.6,689.5 617.9,687.0 C621.2,684.5 622.1,688.8 625.4,691.6 C628.8,694.3 634.6,701.6 638.0,703.6 C641.3,705.6 642.8,704.8 645.5,703.6 C648.2,702.4 651.3,697.2 654.3,696.6 C657.2,695.9 659.9,697.4 663.0,699.6 C666.2,701.8 669.7,709.5 673.1,709.6 C676.4,709.7 678.9,704.4 683.1,700.3 C687.3,696.3 694.8,687.6 698.2,685.3 C701.5,683.0 700.7,685.1 703.2,686.5 C705.7,688.0 709.0,694.1 713.2,694.1 C717.4,694.0 724.1,687.8 728.2,686.0 C732.4,684.3 735.8,683.4 738.3,683.5 C740.8,683.6 740.4,686.0 743.3,686.5 C746.2,687.0 752.5,687.0 755.8,686.5 C759.2,686.0 760.8,683.5 763.4,683.5 C765.9,683.5 768.0,683.1 770.9,686.5 C773.8,690.0 777.6,700.0 780.9,704.1 C784.3,708.2 787.2,709.5 790.9,711.1 C794.7,712.7 798.5,713.6 803.5,713.6 C808.5,713.6 815.6,712.3 821.0,711.1 C826.5,709.9 831.1,709.8 836.1,706.6 C841.1,703.4 846.9,693.7 851.1,692.1 C855.3,690.4 857.4,693.5 861.2,696.6 C864.9,699.6 869.5,709.4 873.7,710.4 C877.9,711.3 881.6,703.6 886.2,702.1 C890.8,700.5 897.9,701.0 901.3,701.1 C904.6,701.2 903.8,703.2 906.3,702.8 C908.8,702.5 912.6,702.5 916.3,699.1 C920.1,695.6 924.3,685.0 928.9,682.0 C933.5,679.1 939.7,680.6 943.9,681.5 C948.1,682.5 951.3,684.7 953.9,687.8 C956.6,690.9 958.2,697.2 960.0,700.3 C961.8,703.5 962.5,705.2 965.0,706.6 C967.5,708.0 970.9,708.5 975.0,708.6 C979.2,708.7 985.1,706.7 990.1,707.1 C995.1,707.5 1001.4,710.9 1005.1,711.1 C1008.9,711.4 1010.2,710.2 1012.7,708.6 C1015.2,707.0 1017.3,703.5 1020.2,701.6 C1023.1,699.7 1026.0,696.4 1030.2,697.1 C1034.4,697.7 1041.1,705.0 1045.3,705.3 C1049.4,705.7 1051.1,702.0 1055.3,699.1 C1059.5,696.2 1066.2,690.2 1070.3,687.8 C1074.5,685.4 1076.2,683.5 1080.4,684.5 C1084.6,685.6 1090.4,690.6 1095.4,694.1 C1100.4,697.5 1106.7,702.3 1110.5,705.3 C1114.2,708.4 1114.6,712.3 1118.0,712.1 C1121.3,711.9 1126.8,707.7 1130.5,704.1 C1134.3,700.5 1137.2,693.6 1140.6,690.3 C1143.9,687.0 1147.3,685.2 1150.6,684.0 C1153.9,682.9 1157.3,682.7 1160.6,683.5 C1164.0,684.4 1167.7,685.8 1170.7,689.0 C1173.6,692.3 1175.3,699.0 1178.2,702.8 C1181.1,706.7 1184.5,711.2 1188.2,712.1 C1192.0,713.1 1197.0,709.6 1200.8,708.6 C1204.5,707.6 1207.4,707.1 1210.8,706.1 C1214.1,705.1 1217.5,702.8 1220.8,702.8 C1224.2,702.8 1227.5,704.7 1230.8,706.1 C1234.2,707.5 1237.5,711.5 1240.9,711.1 C1244.2,710.8 1247.6,707.6 1250.9,704.1 C1254.3,700.6 1258.4,692.8 1260.9,690.3 C1263.4,687.8 1263.9,687.6 1266.0,689.0 C1268.0,690.5 1270.6,695.7 1273.5,699.1 C1276.4,702.5 1280.2,708.6 1283.5,709.6 C1286.9,710.7 1289.8,706.9 1293.5,705.3 C1297.3,703.8 1302.3,701.3 1306.1,700.3 C1309.8,699.4 1312.8,699.4 1316.1,699.6 C1319.5,699.8 1323.2,701.7 1326.1,701.6 C1329.1,701.5 1331.4,701.6 1333.7,699.1 C1336.0,696.6 1337.3,689.5 1340.0,686.5 C1342.7,683.6 1345.9,682.4 1350.0,681.5 C1354.2,680.7 1358.4,681.4 1365.1,681.5 C1371.8,681.6 1382.6,681.7 1390.2,682.0 C1397.7,682.4 1405.2,682.4 1410.2,683.5 C1415.2,684.7 1416.5,685.3 1420.3,689.0 C1424.0,692.8 1429.4,704.0 1432.8,706.1 C1436.1,708.2 1437.0,704.8 1440.3,701.6 C1443.7,698.3 1449.1,690.1 1452.9,686.5 C1456.6,683.0 1459.5,680.5 1462.9,680.3 C1466.2,680.1 1469.2,681.7 1472.9,685.3 C1476.7,688.8 1481.3,697.3 1485.5,701.6 C1489.6,705.9 1493.8,710.4 1498.0,711.1 C1502.2,711.9 1506.8,707.7 1510.5,706.1 C1514.3,704.5 1517.2,702.1 1520.6,701.6 C1523.9,701.0 1527.3,702.2 1530.6,702.8 C1533.9,703.5 1536.4,704.8 1540.6,705.3 C1544.8,705.9 1551.5,707.1 1555.7,706.1 C1559.9,705.1 1562.4,701.0 1565.7,699.1 C1569.0,697.2 1573.2,694.1 1575.7,694.6 C1578.2,695.1 1578.2,701.0 1580.8,702.1 C1583.3,703.2 1587.9,702.1 1590.8,701.1 C1593.7,700.1 1595.8,696.4 1598.3,696.1 C1600.8,695.7 1602.9,699.0 1605.8,699.1 C1608.8,699.2 1612.1,699.0 1615.9,696.6 C1619.6,694.1 1625.1,686.4 1628.4,684.5 C1631.7,682.7 1631.7,681.2 1635.9,685.3 C1640.1,689.4 1648.9,706.8 1653.5,709.1 C1658.1,711.4 1660.2,702.4 1663.5,699.1 C1666.9,695.7 1670.2,690.3 1673.5,689.0 C1676.9,687.8 1680.6,690.9 1683.6,691.6 C1686.5,692.2 1687.3,694.1 1691.1,692.8 C1694.9,691.5 1702.0,685.4 1706.1,683.5 C1710.3,681.6 1712.8,681.5 1716.2,681.5 C1719.5,681.5 1722.9,683.3 1726.2,683.5 C1729.6,683.7 1734.6,682.9 1736.2,682.8" shape-rendering="crispEdges" fill="none" stroke="#1e9bff" stroke-width="1"/>
<path d="M16.0,704.1 C16.8,704.5 18.5,707.0 21.0,706.6 C23.5,706.2 27.3,704.1 31.0,701.6 C34.8,699.1 39.8,694.0 43.6,691.6 C47.3,689.1 50.3,687.4 53.6,687.0 C57.0,686.7 59.9,687.5 63.6,689.5 C67.4,691.6 72.0,696.3 76.2,699.1 C80.4,701.8 84.1,704.8 88.7,706.1 C93.3,707.4 100.4,706.9 103.8,707.1 C107.1,707.3 105.9,707.7 108.8,707.1 C111.7,706.5 116.7,704.3 121.3,703.6 C125.9,702.9 132.6,703.6 136.4,702.8 C140.1,702.1 140.6,701.6 143.9,699.1 C147.2,696.6 152.7,689.8 156.4,687.8 C160.2,685.8 163.1,686.3 166.5,687.0 C169.8,687.8 172.3,688.6 176.5,692.1 C180.7,695.5 186.5,705.4 191.5,707.9 C196.6,710.3 202.4,707.6 206.6,706.6 C210.8,705.6 212.9,704.7 216.6,701.6 C220.4,698.5 225.8,690.5 229.2,687.8 C232.5,685.1 233.8,684.2 236.7,685.3 C239.6,686.3 243.4,690.1 246.7,694.1 C250.1,698.0 253.8,706.3 256.8,709.1 C259.7,712.0 260.9,712.0 264.3,711.1 C267.6,710.3 272.2,704.8 276.8,704.1 C281.4,703.3 287.7,707.0 291.9,706.6 C296.0,706.2 298.1,704.7 301.9,701.6 C305.7,698.5 311.1,689.7 314.4,687.8 C317.8,685.9 318.6,687.4 322.0,690.3 C325.3,693.2 331.6,702.7 334.5,705.3 C337.4,708.0 336.6,707.6 339.5,706.1 C342.4,704.6 347.5,700.5 352.1,696.6 C356.6,692.7 362.9,684.7 367.1,682.8 C371.3,680.9 373.8,682.6 377.1,685.3 C380.5,688.0 383.8,694.9 387.2,699.1 C390.5,703.3 393.8,709.6 397.2,710.4 C400.5,711.1 403.0,707.8 407.2,703.6 C411.4,699.4 417.3,688.8 422.3,685.3 C427.3,681.8 433.1,683.0 437.3,682.8 C441.5,682.6 444.0,681.7 447.3,684.0 C450.7,686.3 453.6,692.4 457.4,696.6 C461.1,700.8 466.2,708.3 469.9,709.1 C473.7,709.9 477.0,705.1 479.9,701.6 C482.9,698.0 485.8,690.3 487.5,687.8 C489.1,685.3 488.7,687.0 490.0,686.5 C491.3,686.1 492.5,684.0 495.0,685.3 C497.5,686.5 500.9,690.1 505.0,694.1 C509.2,698.0 515.9,706.6 520.1,709.1 C524.3,711.6 526.8,711.0 530.1,709.1 C533.5,707.2 536.4,701.1 540.2,697.8 C543.9,694.6 548.9,689.8 552.7,689.5 C556.5,689.3 559.4,693.8 562.7,696.6 C566.1,699.3 569.0,703.7 572.8,706.1 C576.5,708.5 581.5,710.0 585.3,711.1 C589.1,712.2 591.6,713.6 595.3,712.9 C599.1,712.1 603.3,710.4 607.9,706.6 C612.5,702.8 619.2,692.8 622.9,690.3 C626.7,687.8 627.5,690.1 630.4,691.6 C633.4,693.0 637.1,697.2 640.5,699.1 C643.8,701.0 647.2,702.8 650.5,702.8 C653.8,702.8 657.2,699.2 660.5,699.1 C663.9,699.0 666.8,701.0 670.6,702.1 C674.3,703.1 678.1,707.5 683.1,705.3 C688.1,703.2 696.9,692.1 700.7,689.0 C704.4,686.0 702.3,686.6 705.7,687.0 C709.0,687.5 716.5,691.6 720.7,691.6 C724.9,691.5 727.4,687.7 730.8,686.5 C734.1,685.4 736.6,684.4 740.8,684.5 C745.0,684.6 750.8,686.9 755.8,687.0 C760.8,687.2 765.9,683.3 770.9,685.3 C775.9,687.3 782.2,695.1 785.9,699.1 C789.7,703.0 789.7,706.7 793.4,709.1 C797.2,711.5 803.9,713.2 808.5,713.6 C813.1,714.0 816.4,712.4 821.0,711.6 C825.6,710.9 830.2,711.8 836.1,709.1 C841.9,706.4 851.1,697.0 856.1,695.3 C861.2,693.6 862.4,697.0 866.2,699.1 C869.9,701.2 874.5,707.1 878.7,707.9 C882.9,708.6 886.7,704.6 891.3,703.6 C895.9,702.6 901.3,703.3 906.3,702.1 C911.3,700.9 916.8,699.8 921.3,696.6 C925.9,693.4 930.1,685.2 933.9,682.8 C937.6,680.4 940.6,681.5 943.9,682.0 C947.3,682.6 951.3,684.2 953.9,686.0 C956.6,687.8 958.2,690.8 960.0,692.8 C961.8,694.8 962.5,695.3 965.0,697.8 C967.5,700.3 970.9,706.2 975.0,707.9 C979.2,709.5 984.2,707.4 990.1,707.9 C995.9,708.3 1004.7,711.1 1010.2,710.4 C1015.6,709.7 1018.9,705.7 1022.7,703.6 C1026.5,701.5 1029.8,698.7 1032.7,697.8 C1035.7,697.0 1037.3,697.9 1040.3,698.6 C1043.2,699.3 1047.4,701.8 1050.3,702.1 C1053.2,702.4 1054.5,701.9 1057.8,700.3 C1061.1,698.8 1066.2,695.3 1070.3,692.8 C1074.5,690.3 1078.7,685.9 1082.9,685.3 C1087.1,684.7 1090.8,686.3 1095.4,689.0 C1100.0,691.8 1105.9,698.2 1110.5,701.6 C1115.1,705.0 1119.2,708.4 1123.0,709.6 C1126.8,710.9 1129.3,712.3 1133.0,709.1 C1136.8,705.9 1141.2,694.7 1145.6,690.3 C1150.0,685.9 1155.6,683.6 1159.4,682.8 C1163.1,681.9 1164.6,682.4 1168.2,685.3 C1171.7,688.2 1176.9,696.3 1180.7,700.3 C1184.5,704.4 1187.4,707.9 1190.7,709.6 C1194.1,711.3 1197.4,710.9 1200.8,710.4 C1204.1,709.8 1207.0,707.2 1210.8,706.1 C1214.5,705.0 1220.0,703.7 1223.3,703.6 C1226.7,703.5 1227.9,704.2 1230.8,705.3 C1233.8,706.5 1237.5,710.2 1240.9,710.4 C1244.2,710.6 1246.3,709.7 1250.9,706.6 C1255.5,703.5 1263.9,693.2 1268.5,691.6 C1273.1,689.9 1275.2,694.4 1278.5,696.6 C1281.8,698.7 1285.6,702.8 1288.5,704.6 C1291.5,706.4 1292.3,707.7 1296.1,707.1 C1299.8,706.5 1306.9,702.2 1311.1,701.1 C1315.3,700.0 1317.8,700.3 1321.1,700.3 C1324.5,700.3 1328.0,701.9 1331.2,701.1 C1334.3,700.2 1336.9,698.2 1340.0,695.3 C1343.1,692.5 1345.9,686.3 1350.0,684.0 C1354.2,681.7 1355.0,681.6 1365.1,681.5 C1375.1,681.4 1400.6,682.3 1410.2,683.5 C1419.8,684.8 1418.2,685.8 1422.8,689.0 C1427.4,692.3 1433.6,701.2 1437.8,702.8 C1442.0,704.5 1444.5,701.6 1447.8,699.1 C1451.2,696.6 1454.5,690.7 1457.9,687.8 C1461.2,684.9 1464.6,681.9 1467.9,681.5 C1471.2,681.1 1473.3,681.0 1477.9,685.3 C1482.5,689.5 1490.1,703.1 1495.5,707.1 C1500.9,711.1 1505.5,709.8 1510.5,709.1 C1515.5,708.4 1521.0,704.0 1525.6,702.8 C1530.2,701.7 1533.5,701.5 1538.1,702.1 C1542.7,702.6 1549.4,705.3 1553.2,706.1 C1556.9,706.9 1556.9,707.9 1560.7,706.6 C1564.5,705.3 1570.7,699.7 1575.7,698.6 C1580.8,697.4 1585.8,699.7 1590.8,699.6 C1595.8,699.5 1601.7,698.2 1605.8,697.8 C1610.0,697.4 1611.7,699.2 1615.9,697.1 C1620.0,695.0 1626.7,687.0 1630.9,685.3 C1635.1,683.5 1636.3,683.0 1640.9,686.5 C1645.5,690.1 1654.3,703.8 1658.5,706.6 C1662.7,709.4 1663.1,706.0 1666.0,703.6 C1668.9,701.2 1671.9,694.0 1676.1,692.1 C1680.2,690.1 1686.1,693.0 1691.1,692.1 C1696.1,691.1 1701.5,688.3 1706.1,686.5 C1710.7,684.8 1715.3,682.0 1718.7,681.5 C1722.0,681.0 1723.3,683.2 1726.2,683.5 C1729.1,683.9 1734.6,683.5 1736.2,683.5" shape-rendering="crispEdges" fill="none" stroke="#ff3a10" stroke-width="1"/>
</g>
<text x="25" y="673" font-family='"Liberation Sans", sans-serif' font-size="16" fill="#1e9bff" textLength="305.3" lengthAdjust="spacingAndGlyphs">StochS, KSE 100 INX, 3/30/2018, 92.362,</text>
<text x="335.8" y="673" font-family='"Liberation Sans", sans-serif' font-size="16" fill="#ff3a10" textLength="49.3" lengthAdjust="spacingAndGlyphs">89.749</text>
<rect x="1827" y="672" width="84" height="21" fill="#1e9bff"/>
<text x="1827" y="689" font-family='"Liberation Sans", sans-serif' font-weight="bold" font-size="16" fill="#000" textLength="58" lengthAdjust="spacingAndGlyphs">92.362</text>
<rect x="1827" y="693" width="84" height="20.5" fill="#ff3300"/>
<text x="1827" y="710" font-family='"Liberation Sans", sans-serif' font-size="16" fill="#000" textLength="50" lengthAdjust="spacingAndGlyphs">89.749</text>
<rect x="1833.5" y="717.5" width="42" height="4" fill="#fff" stroke="#c8c8c8" stroke-width="1"/>
<g clip-path="url(#cc)">
<polyline points="16.0,751.5 41.1,753.3 71.2,754.5 103.8,758.3 128.9,760.8 179.0,760.8 216.6,762.6 266.8,764.1 291.9,765.3 342.0,765.3 367.1,762.1 382.1,760.1 402.2,759.1 429.8,755.8 452.4,753.3 479.9,752.0 490.0,752.0 510.1,752.5 527.6,756.5 555.2,760.8 585.3,767.1 605.4,772.1 630.4,775.1 653.0,776.6 685.6,776.6 703.2,774.1 728.2,770.8 755.8,765.8 778.4,762.6 803.5,763.3 816.0,765.1 841.1,770.1 878.7,774.1 903.8,775.1 931.4,770.8 953.9,767.6 960.0,767.1 975.0,765.8 997.6,765.1 1022.7,766.6 1042.8,768.3 1075.4,767.8 1100.4,766.3 1135.5,765.8 1165.6,764.6 1185.7,763.3 1210.8,763.3 1235.9,765.1 1271.0,765.8 1301.1,767.6 1331.2,769.1 1340.0,768.3 1365.1,765.1 1380.1,762.1 1405.2,756.5 1430.3,752.5 1465.4,749.0 1485.5,748.3 1515.5,751.5 1545.6,754.0 1575.7,758.3 1605.8,760.8 1643.4,760.8 1701.1,760.8 1716.2,759.1 1736.2,757.0" shape-rendering="crispEdges" fill="none" stroke="#00c4f0" stroke-width="1"/>
<polyline points="16.0,754.0 41.1,755.0 71.2,755.8 103.8,759.6 131.4,762.1 191.5,762.6 209.1,764.1 241.7,762.6 266.8,764.6 286.8,766.3 316.9,764.6 337.0,766.3 352.1,764.1 367.1,759.1 392.2,759.1 417.3,754.5 442.3,751.5 462.4,752.0 479.9,751.5 490.0,750.3 500.0,751.5 510.1,753.3 525.1,760.1 540.2,762.1 560.2,765.8 577.8,769.6 597.8,775.9 622.9,777.1 650.5,776.6 680.6,776.6 703.2,772.6 728.2,767.1 760.8,761.6 790.9,762.1 811.0,767.1 831.1,773.3 866.2,775.9 891.3,775.9 911.3,773.3 936.4,767.1 956.5,764.6 960.0,764.6 995.1,764.6 1010.2,767.8 1030.2,768.6 1045.3,770.1 1060.3,769.1 1075.4,767.1 1100.4,765.1 1123.0,766.3 1150.6,765.1 1168.2,762.1 1180.7,761.6 1210.8,763.3 1230.8,765.1 1245.9,766.3 1276.0,767.1 1301.1,769.1 1326.1,769.1 1340.0,766.6 1355.0,763.3 1370.1,760.1 1390.2,755.0 1412.7,750.8 1440.3,750.8 1460.4,747.0 1480.4,747.0 1500.5,750.0 1530.6,754.5 1565.7,759.6 1590.8,760.8 1605.8,762.1 1615.9,761.3 1640.9,761.3 1691.1,760.1 1706.1,758.3 1721.2,756.5 1736.2,755.0" shape-rendering="crispEdges" fill="none" stroke="#e6d800" stroke-width="1"/>
<rect x="17" y="761" width="1809" height="1" fill="#e6d800"/>
</g>
<text x="25" y="741.5" font-family='"Liberation Sans", sans-serif' font-size="16" fill="#e6d200" textLength="301.6" lengthAdjust="spacingAndGlyphs">MACD, KSE 100 INX, 3/30/2018, 527.55,</text>
<text x="332.1" y="741.5" font-family='"Liberation Sans", sans-serif' font-size="16" fill="#10c4f0" textLength="49.4" lengthAdjust="spacingAndGlyphs">339.03</text>
<rect x="1827" y="745" width="84" height="21" fill="#e6dc00"/>
<text x="1827" y="762" font-family='"Liberation Sans", sans-serif' font-weight="bold" font-size="16" fill="#000" textLength="58" lengthAdjust="spacingAndGlyphs">527.55</text>
<rect x="1827" y="766" width="84" height="17.5" fill="#00ccff"/>
<text x="1827" y="781" font-family='"Liberation Sans", sans-serif' font-size="16" fill="#000" textLength="50" lengthAdjust="spacingAndGlyphs">339.03</text>
<rect x="18" y="785" width="1" height="3" fill="#000"/>
<text x="21.0" y="803.8" font-family='"Liberation Sans", sans-serif' font-size="16" fill="#000" textLength="17.2" lengthAdjust="spacingAndGlyphs">01</text>
<rect x="83" y="785" width="1" height="3" fill="#000"/>
<text x="77.2" y="803.8" font-family='"Liberation Sans", sans-serif' font-size="16" fill="#000" textLength="17.2" lengthAdjust="spacingAndGlyphs">16</text>
<rect x="137" y="785" width="1" height="3" fill="#000"/>
<text x="131.8" y="803.8" font-family='"Liberation Sans", sans-serif' font-size="16" fill="#000" textLength="17.2" lengthAdjust="spacingAndGlyphs">01</text>
<rect x="202" y="785" width="1" height="3" fill="#000"/>
<text x="196.2" y="803.8" font-family='"Liberation Sans", sans-serif' font-size="16" fill="#000" textLength="17.2" lengthAdjust="spacingAndGlyphs">16</text>
<rect x="268" y="785" width="1" height="3" fill="#000"/>
<text x="262.2" y="803.8" font-family='"Liberation Sans", sans-serif' font-size="16" fill="#000" textLength="17.2" lengthAdjust="spacingAndGlyphs">03</text>
<rect x="327" y="785" width="1" height="3" fill="#000"/>
<text x="321.2" y="803.8" font-family='"Liberation Sans", sans-serif' font-size="16" fill="#000" textLength="17.2" lengthAdjust="spacingAndGlyphs">17</text>
<rect x="387" y="785" width="1" height="3" fill="#000"/>
<text x="381.2" y="803.8" font-family='"Liberation Sans", sans-serif' font-size="16" fill="#000" textLength="17.2" lengthAdjust="spacingAndGlyphs">02</text>
<rect x="446" y="785" width="1" height="3" fill="#000"/>
<text x="440.2" y="803.8" font-family='"Liberation Sans", sans-serif' font-size="16" fill="#000" textLength="17.2" lengthAdjust="spacingAndGlyphs">16</text>
<rect x="517" y="785" width="1" height="3" fill="#000"/>
<text x="511.2" y="803.8" font-family='"Liberation Sans", sans-serif' font-size="16" fill="#000" textLength="17.2" lengthAdjust="spacingAndGlyphs">01</text>
<rect x="583" y="785" width="1" height="3" fill="#000"/>
<text x="577.2" y="803.8" font-family='"Liberation Sans", sans-serif' font-size="16" fill="#000" textLength="17.2" lengthAdjust="spacingAndGlyphs">16</text>
<rect x="624" y="785" width="1" height="3" fill="#000"/>
<text x="618.5" y="803.8" font-family='"Liberation Sans", sans-serif' font-size="16" fill="#000" textLength="17.2" lengthAdjust="spacingAndGlyphs">03</text>
<rect x="684" y="785" width="1" height="3" fill="#000"/>
<text x="678.4" y="803.8" font-family='"Liberation Sans", sans-serif' font-size="16" fill="#000" textLength="17.2" lengthAdjust="spacingAndGlyphs">17</text>
<rect x="749" y="785" width="1" height="3" fill="#000"/>
<text x="743.6" y="803.8" font-family='"Liberation Sans", sans-serif' font-size="16" fill="#000" textLength="17.2" lengthAdjust="spacingAndGlyphs">01</text>
<rect x="809" y="785" width="1" height="3" fill="#000"/>
<text x="803.8" y="803.8" font-family='"Liberation Sans", sans-serif' font-size="16" fill="#000" textLength="17.2" lengthAdjust="spacingAndGlyphs">16</text>
<rect x="880" y="785" width="1" height="3" fill="#000"/>
<text x="874.4" y="803.8" font-family='"Liberation Sans", sans-serif' font-size="16" fill="#000" textLength="17.2" lengthAdjust="spacingAndGlyphs">05</text>
<rect x="933" y="785" width="1" height="3" fill="#000"/>
<text x="927.6" y="803.8" font-family='"Liberation Sans", sans-serif' font-size="16" fill="#000" textLength="17.2" lengthAdjust="spacingAndGlyphs">18</text>
<rect x="993" y="785" width="1" height="3" fill="#000"/>
<text x="987.8" y="803.8" font-family='"Liberation Sans", sans-serif' font-size="16" fill="#000" textLength="17.2" lengthAdjust="spacingAndGlyphs">02</text>
<rect x="1052" y="785" width="1" height="3" fill="#000"/>
<text x="1046.6" y="803.8" font-family='"Liberation Sans", sans-serif' font-size="16" fill="#000" textLength="17.2" lengthAdjust="spacingAndGlyphs">16</text>
<rect x="1124" y="785" width="1" height="3" fill="#000"/>
<text x="1118.5" y="803.8" font-family='"Liberation Sans", sans-serif' font-size="16" fill="#000" textLength="17.2" lengthAdjust="spacingAndGlyphs">01</text>
<rect x="1194" y="785" width="1" height="3" fill="#000"/>
<text x="1188.4" y="803.8" font-family='"Liberation Sans", sans-serif' font-size="16" fill="#000" textLength="17.2" lengthAdjust="spacingAndGlyphs">16</text>
<rect x="1254" y="785" width="1" height="3" fill="#000"/>
<text x="1248.7" y="803.8" font-family='"Liberation Sans", sans-serif' font-size="16" fill="#000" textLength="17.2" lengthAdjust="spacingAndGlyphs">04</text>
<rect x="1314" y="785" width="1" height="3" fill="#000"/>
<text x="1308.4" y="803.8" font-family='"Liberation Sans", sans-serif' font-size="16" fill="#000" textLength="17.2" lengthAdjust="spacingAndGlyphs">18</text>
<rect x="1367" y="785" width="1" height="3" fill="#000"/>
<text x="1361.6" y="803.8" font-family='"Liberation Sans", sans-serif' font-size="16" fill="#000" textLength="17.2" lengthAdjust="spacingAndGlyphs">01</text>
<rect x="1433" y="785" width="1" height="3" fill="#000"/>
<text x="1427.5" y="803.8" font-family='"Liberation Sans", sans-serif' font-size="16" fill="#000" textLength="17.2" lengthAdjust="spacingAndGlyphs">16</text>
<rect x="1504" y="785" width="1" height="3" fill="#000"/>
<text x="1498.4" y="803.8" font-family='"Liberation Sans", sans-serif' font-size="16" fill="#000" textLength="17.2" lengthAdjust="spacingAndGlyphs">01</text>
<rect x="1563" y="785" width="1" height="3" fill="#000"/>
<text x="1557.6" y="803.8" font-family='"Liberation Sans", sans-serif' font-size="16" fill="#000" textLength="17.2" lengthAdjust="spacingAndGlyphs">16</text>
<rect x="1617" y="785" width="1" height="3" fill="#000"/>
<text x="1611.5" y="803.8" font-family='"Liberation Sans", sans-serif' font-size="16" fill="#000" textLength="17.2" lengthAdjust="spacingAndGlyphs">01</text>
<rect x="1682" y="785" width="1" height="3" fill="#000"/>
<text x="1676.7" y="803.8" font-family='"Liberation Sans", sans-serif' font-size="16" fill="#000" textLength="17.2" lengthAdjust="spacingAndGlyphs">16</text>
<rect x="1742" y="785" width="1" height="3" fill="#000"/>
<text x="1736.5" y="803.8" font-family='"Liberation Sans", sans-serif' font-size="16" fill="#000" textLength="17.2" lengthAdjust="spacingAndGlyphs">02</text>
<rect x="1801" y="785" width="1" height="3" fill="#000"/>
<text x="1795.4" y="803.8" font-family='"Liberation Sans", sans-serif' font-size="16" fill="#000" textLength="17.2" lengthAdjust="spacingAndGlyphs">16</text>
<rect x="18" y="809" width="1" height="20" fill="#000"/>
<text x="49.5" y="824.8" font-family='"Liberation Sans", sans-serif' font-weight="bold" font-size="16" fill="#000" textLength="57" lengthAdjust="spacingAndGlyphs">Feb 17</text>
<rect x="137" y="809" width="1" height="20" fill="#000"/>
<text x="174.3" y="824.8" font-family='"Liberation Sans", sans-serif' font-weight="bold" font-size="16" fill="#000" textLength="57" lengthAdjust="spacingAndGlyphs">Mar 17</text>
<rect x="268" y="809" width="1" height="20" fill="#000"/>
<text x="299.0" y="824.8" font-family='"Liberation Sans", sans-serif' font-weight="bold" font-size="16" fill="#000" textLength="57" lengthAdjust="spacingAndGlyphs">Apr 17</text>
<rect x="387" y="809" width="1" height="20" fill="#000"/>
<text x="423.5" y="824.8" font-family='"Liberation Sans", sans-serif' font-weight="bold" font-size="16" fill="#000" textLength="57" lengthAdjust="spacingAndGlyphs">May 17</text>
<rect x="517" y="809" width="1" height="20" fill="#000"/>
<text x="542.1" y="824.8" font-family='"Liberation Sans", sans-serif' font-weight="bold" font-size="16" fill="#000" textLength="57" lengthAdjust="spacingAndGlyphs">Jun 17</text>
<rect x="624" y="809" width="1" height="20" fill="#000"/>
<text x="658.3" y="824.8" font-family='"Liberation Sans", sans-serif' font-weight="bold" font-size="16" fill="#000" textLength="57" lengthAdjust="spacingAndGlyphs">Jul 17</text>
<rect x="749" y="809" width="1" height="20" fill="#000"/>
<text x="786.3" y="824.8" font-family='"Liberation Sans", sans-serif' font-weight="bold" font-size="16" fill="#000" textLength="57" lengthAdjust="spacingAndGlyphs">Aug 17</text>
<rect x="880" y="809" width="1" height="20" fill="#000"/>
<text x="908.4" y="824.8" font-family='"Liberation Sans", sans-serif' font-weight="bold" font-size="16" fill="#000" textLength="57" lengthAdjust="spacingAndGlyphs">Sep 17</text>
<rect x="993" y="809" width="1" height="20" fill="#000"/>
<text x="1030.5" y="824.8" font-family='"Liberation Sans", sans-serif' font-weight="bold" font-size="16" fill="#000" textLength="57" lengthAdjust="spacingAndGlyphs">Oct 17</text>
<rect x="1124" y="809" width="1" height="20" fill="#000"/>
<text x="1160.9" y="824.8" font-family='"Liberation Sans", sans-serif' font-weight="bold" font-size="16" fill="#000" textLength="57" lengthAdjust="spacingAndGlyphs">Nov 17</text>
<rect x="1254" y="809" width="1" height="20" fill="#000"/>
<text x="1282.5" y="824.8" font-family='"Liberation Sans", sans-serif' font-weight="bold" font-size="16" fill="#000" textLength="57" lengthAdjust="spacingAndGlyphs">Dec 17</text>
<rect x="1367" y="809" width="1" height="20" fill="#000"/>
<text x="1407.3" y="824.8" font-family='"Liberation Sans", sans-serif' font-weight="bold" font-size="16" fill="#000" textLength="57" lengthAdjust="spacingAndGlyphs">Jan 18</text>
<rect x="1504" y="809" width="1" height="20" fill="#000"/>
<text x="1532.2" y="824.8" font-family='"Liberation Sans", sans-serif' font-weight="bold" font-size="16" fill="#000" textLength="57" lengthAdjust="spacingAndGlyphs">Feb 18</text>
<rect x="1617" y="809" width="1" height="20" fill="#000"/>
<text x="1651.3" y="824.8" font-family='"Liberation Sans", sans-serif' font-weight="bold" font-size="16" fill="#000" textLength="57" lengthAdjust="spacingAndGlyphs">Mar 18</text>
<rect x="1742" y="809" width="1" height="20" fill="#000"/>
<text x="1755.5" y="824.8" font-family='"Liberation Sans", sans-serif' font-weight="bold" font-size="16" fill="#000" textLength="57" lengthAdjust="spacingAndGlyphs">Apr 18</text>
<rect x="2" y="829" width="1909" height="17" fill="#ffffff"/>
<rect x="55" y="829.5" width="1706" height="16.5" fill="#c8c8c8"/>
<rect x="27.5" y="830" width="27.7" height="16" fill="#ebebeb"/>
<rect x="4.5" y="830.5" width="23" height="16" rx="1.5" fill="#f0f0f0" stroke="#9a9a9a" stroke-width="1"/>
<rect x="5" y="837" width="22" height="9" fill="#dcdcdc"/>
<path d="M14.5 836.5 L10 841.5 L14.5 846.5 M20.5 836.5 L16 841.5 L20.5 846.5" fill="none" stroke="#000" stroke-width="2.6"/>
<path d="M43.5 834 L38.5 837.5 L43.5 841 Z" fill="#404040"/>
<rect x="1763" y="830.5" width="92" height="14" rx="2" fill="#e2e2e2" stroke="#a0a0a0" stroke-width="1"/>
<rect x="1772" y="831" width="72" height="13" fill="#ffffff"/>
<text x="1773" y="841" font-family='"Liberation Sans", sans-serif' font-size="11" fill="#000" textLength="70" lengthAdjust="spacingAndGlyphs">305 Data Period</text>
<rect x="1858" y="829.5" width="27" height="16.5" fill="#ebebeb"/>
<path d="M1870.5 834 L1875 837.5 L1870.5 841 Z" fill="#404040"/>
<rect x="1886.5" y="830.5" width="22" height="16" rx="1.5" fill="#f0f0f0" stroke="#9a9a9a" stroke-width="1"/>
<rect x="1887" y="837" width="21" height="9" fill="#dcdcdc"/>
<path d="M1892.5 837.5 L1897 842 L1892.5 846.5 M1898.5 837.5 L1903 842 L1898.5 846.5" fill="none" stroke="#000" stroke-width="2.6"/>
<rect x="0" y="846" width="1911" height="1" fill="#000000"/>
<rect x="0" y="847" width="1914" height="2" fill="#4a4a55"/>
</svg>
</body></html>
